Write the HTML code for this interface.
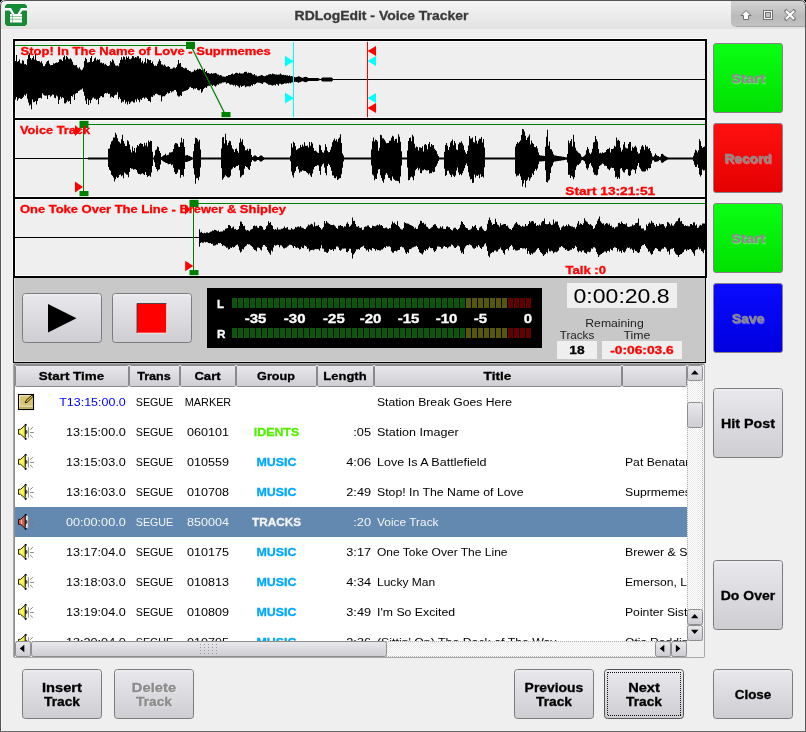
<!DOCTYPE html><html><head><meta charset="utf-8"><style>html,body{margin:0;padding:0;background:#efefef;overflow:hidden}</style></head><body><svg width="806" height="732" viewBox="0 0 806 732" style="display:block;will-change:transform;font-family:'Liberation Sans',sans-serif">
<defs>
<linearGradient id="tb" x1="0" y1="0" x2="0" y2="1"><stop offset="0" stop-color="#f6f6f6"/><stop offset="1" stop-color="#e2e2e2"/></linearGradient>
<linearGradient id="tab" x1="0" y1="0" x2="0" y2="1"><stop offset="0" stop-color="#d6d6d6"/><stop offset="0.6" stop-color="#bababa"/><stop offset="1" stop-color="#c2c2c2"/></linearGradient>
<linearGradient id="btn" x1="0" y1="0" x2="0" y2="1"><stop offset="0" stop-color="#e9e9ed"/><stop offset="1" stop-color="#ceced2"/></linearGradient>
<linearGradient id="gbtn" x1="0" y1="0" x2="0" y2="1"><stop offset="0" stop-color="#0aff14"/><stop offset="1" stop-color="#00e000"/></linearGradient>
<linearGradient id="rbtn" x1="0" y1="0" x2="0" y2="1"><stop offset="0" stop-color="#ff1010"/><stop offset="1" stop-color="#e40000"/></linearGradient>
<linearGradient id="bbtn" x1="0" y1="0" x2="0" y2="1"><stop offset="0" stop-color="#0a0aff"/><stop offset="1" stop-color="#0000e0"/></linearGradient>
<pattern id="chk" width="2" height="2" patternUnits="userSpaceOnUse"><rect width="2" height="2" fill="#fdfdfd"/><rect width="1" height="1" fill="#ebebeb"/><rect x="1" y="1" width="1" height="1" fill="#ebebeb"/></pattern>
<pattern id="dotv" width="1" height="2" patternUnits="userSpaceOnUse"><rect width="1" height="1" fill="#b4b4b4"/></pattern>
<pattern id="dothk" width="2" height="1" patternUnits="userSpaceOnUse"><rect width="1" height="1" fill="#111"/></pattern>
<pattern id="dotvk" width="1" height="2" patternUnits="userSpaceOnUse"><rect width="1" height="1" fill="#111"/></pattern>
<pattern id="doth" width="2" height="1" patternUnits="userSpaceOnUse"><rect width="1" height="1" fill="#b4b4b4"/></pattern>
</defs>
<rect x="0" y="0" width="806" height="732" fill="#000" />
<path d="M0 5 Q0 0 5 0 H801 Q806 0 806 5 V732 H0 Z" fill="#efefef"/>
<path d="M0 5 Q0 0 5 0 H801 Q806 0 806 5 V29 H0 Z" fill="url(#tb)"/>
<path d="M731 0 H801 Q806 0 806 5 V27 H736 Q731 27 731 22 Z" fill="url(#tab)"/>
<rect x="736" y="26" width="70" height="1" fill="#a6a6a6" />
<path d="M0.5 732 V6 Q0.5 0.5 6 0.5 H800 Q805.5 0.5 805.5 6 V732" fill="none" stroke="#555" stroke-width="1"/>
<rect x="0" y="731" width="806" height="1" fill="#6a6a6a" />
<rect x="1" y="29" width="1" height="702" fill="#fafafa" />
<g transform="translate(5,4)">
<path d="M2 0 H20 L22 2 V20 L20 22 H2 L0 20 V2 Z" fill="#178a35"/>
<path d="M0 4.5 H5.5 L8.5 9.5 V13 H3.5 V5 Z" fill="#fff" opacity="0"/>
<path d="M0 4 H6 L10 11 H12 L16 4 H22 V6.5 H17.5 L12.5 13.5 H9.5 L4.5 6.5 H0 Z" fill="#fff"/>
<rect x="5" y="10.5" width="12" height="1.3" fill="#fff" opacity="0"/>
<rect x="5" y="10" width="12" height="8.5" fill="#fff"/>
<rect x="5" y="12.2" width="12" height="0.8" fill="#178a35" opacity="0.6"/>
<rect x="5" y="14.8" width="12" height="0.8" fill="#178a35" opacity="0.6"/>
<rect x="7" y="10" width="0.8" height="8.5" fill="#178a35" opacity="0.5"/>
</g>
<text x="381.50" y="19.50" font-size="12.72" font-weight="bold" fill="#3a3a3a" stroke="#3a3a3a" stroke-width="0.3" text-anchor="middle" textLength="173.78" lengthAdjust="spacingAndGlyphs" >RDLogEdit - Voice Tracker</text>
<g fill="#fff" stroke="#6e6e6e" stroke-width="1">
<path d="M746 10.5 L751 15.5 H748.5 V19.5 H743.5 V15.5 H741 Z"/>
<rect x="763.5" y="10.5" width="9" height="9"/>
<rect x="765.5" y="12.5" width="5" height="5" fill="#c2c2c2"/>
<path d="M786.3 11.3 L793.7 18.7 M793.7 11.3 L786.3 18.7" stroke="#6a6a6a" stroke-width="3.8" stroke-linecap="square" opacity="0.7"/>
<path d="M786 11 L794 19 M794 11 L786 19" stroke="#fff" stroke-width="2.1" stroke-linecap="butt"/>
</g>

<rect x="13" y="39" width="693" height="238" fill="#efefef" />
<rect x="15" y="41" width="1" height="236" fill="#fff" opacity="0.6"/>
<rect x="15" y="79" width="690" height="1" fill="#000" />
<rect x="15" y="158" width="690" height="1" fill="#000" />
<rect x="15" y="237" width="690" height="1" fill="#000" />
<path d="M15 79.5 L15 60.9 L16 60.9 L16 55.0 L17 55.0 L17 61.7 L18 61.7 L18 60.9 L19 60.9 L19 59.5 L20 59.5 L20 63.3 L21 63.3 L21 63.6 L22 63.6 L22 60.2 L23 60.2 L23 60.8 L24 60.8 L24 64.3 L25 64.3 L25 63.9 L26 63.9 L26 65.1 L27 65.1 L27 59.2 L28 59.2 L28 54.7 L29 54.7 L29 53.2 L30 53.2 L30 58.0 L31 58.0 L31 59.4 L32 59.4 L32 58.1 L33 58.1 L33 56.3 L34 56.3 L34 59.6 L35 59.6 L35 52.7 L36 52.7 L36 60.2 L37 60.2 L37 61.1 L38 61.1 L38 60.9 L39 60.9 L39 61.2 L40 61.2 L40 62.5 L41 62.5 L41 61.2 L42 61.2 L42 63.6 L43 63.6 L43 66.2 L44 66.2 L44 66.0 L45 66.0 L45 64.2 L46 64.2 L46 62.3 L47 62.3 L47 61.1 L48 61.1 L48 60.5 L49 60.5 L49 63.7 L50 63.7 L50 65.3 L51 65.3 L51 65.0 L52 65.0 L52 65.0 L53 65.0 L53 63.3 L54 63.3 L54 63.8 L55 63.8 L55 63.0 L56 63.0 L56 62.6 L57 62.6 L57 62.7 L58 62.7 L58 61.9 L59 61.9 L59 59.6 L60 59.6 L60 59.2 L61 59.2 L61 59.8 L62 59.8 L62 60.9 L63 60.9 L63 57.2 L64 57.2 L64 55.6 L65 55.6 L65 59.6 L66 59.6 L66 56.0 L67 56.0 L67 57.2 L68 57.2 L68 58.7 L69 58.7 L69 59.2 L70 59.2 L70 58.3 L71 58.3 L71 59.5 L72 59.5 L72 61.8 L73 61.8 L73 64.8 L74 64.8 L74 65.3 L75 65.3 L75 65.2 L76 65.2 L76 65.1 L77 65.1 L77 67.5 L78 67.5 L78 68.4 L79 68.4 L79 67.3 L80 67.3 L80 69.2 L81 69.2 L81 70.2 L82 70.2 L82 69.6 L83 69.6 L83 67.4 L84 67.4 L84 61.0 L85 61.0 L85 57.8 L86 57.8 L86 59.0 L87 59.0 L87 62.6 L88 62.6 L88 62.3 L89 62.3 L89 62.1 L90 62.1 L90 58.1 L91 58.1 L91 56.0 L92 56.0 L92 62.0 L93 62.0 L93 61.1 L94 61.1 L94 58.6 L95 58.6 L95 57.4 L96 57.4 L96 60.6 L97 60.6 L97 59.3 L98 59.3 L98 60.1 L99 60.1 L99 59.2 L100 59.2 L100 62.7 L101 62.7 L101 62.6 L102 62.6 L102 63.4 L103 63.4 L103 63.0 L104 63.0 L104 64.4 L105 64.4 L105 63.7 L106 63.7 L106 65.1 L107 65.1 L107 66.0 L108 66.0 L108 66.1 L109 66.1 L109 65.2 L110 65.2 L110 60.9 L111 60.9 L111 62.3 L112 62.3 L112 59.2 L113 59.2 L113 60.5 L114 60.5 L114 63.6 L115 63.6 L115 65.6 L116 65.6 L116 65.7 L117 65.7 L117 65.4 L118 65.4 L118 66.3 L119 66.3 L119 63.3 L120 63.3 L120 59.9 L121 59.9 L121 57.3 L122 57.3 L122 59.6 L123 59.6 L123 56.6 L124 56.6 L124 56.9 L125 56.9 L125 59.6 L126 59.6 L126 56.6 L127 56.6 L127 58.0 L128 58.0 L128 56.5 L129 56.5 L129 59.1 L130 59.1 L130 59.2 L131 59.2 L131 58.3 L132 58.3 L132 55.9 L133 55.9 L133 56.2 L134 56.2 L134 58.1 L135 58.1 L135 57.1 L136 57.1 L136 57.4 L137 57.4 L137 56.3 L138 56.3 L138 56.2 L139 56.2 L139 58.4 L140 58.4 L140 58.0 L141 58.0 L141 62.6 L142 62.6 L142 60.8 L143 60.8 L143 63.6 L144 63.6 L144 61.9 L145 61.9 L145 58.3 L146 58.3 L146 63.3 L147 63.3 L147 59.1 L148 59.1 L148 59.6 L149 59.6 L149 60.2 L150 60.2 L150 60.0 L151 60.0 L151 62.9 L152 62.9 L152 61.5 L153 61.5 L153 64.3 L154 64.3 L154 66.0 L155 66.0 L155 65.5 L156 65.5 L156 66.1 L157 66.1 L157 63.7 L158 63.7 L158 61.5 L159 61.5 L159 59.2 L160 59.2 L160 60.9 L161 60.9 L161 64.4 L162 64.4 L162 64.4 L163 64.4 L163 65.4 L164 65.4 L164 64.4 L165 64.4 L165 65.8 L166 65.8 L166 66.9 L167 66.9 L167 66.5 L168 66.5 L168 66.2 L169 66.2 L169 67.1 L170 67.1 L170 68.7 L171 68.7 L171 68.8 L172 68.8 L172 68.4 L173 68.4 L173 67.6 L174 67.6 L174 67.5 L175 67.5 L175 68.2 L176 68.2 L176 66.9 L177 66.9 L177 64.5 L178 64.5 L178 60.1 L179 60.1 L179 63.4 L180 63.4 L180 63.1 L181 63.1 L181 66.7 L182 66.7 L182 67.1 L183 67.1 L183 67.9 L184 67.9 L184 68.6 L185 68.6 L185 67.8 L186 67.8 L186 68.2 L187 68.2 L187 70.1 L188 70.1 L188 70.1 L189 70.1 L189 71.1 L190 71.1 L190 71.3 L191 71.3 L191 72.3 L192 72.3 L192 71.7 L193 71.7 L193 71.6 L194 71.6 L194 69.7 L195 69.7 L195 70.6 L196 70.6 L196 70.1 L197 70.1 L197 68.8 L198 68.8 L198 69.5 L199 69.5 L199 68.7 L200 68.7 L200 69.0 L201 69.0 L201 70.1 L202 70.1 L202 70.0 L203 70.0 L203 70.3 L204 70.3 L204 68.7 L205 68.7 L205 72.0 L206 72.0 L206 70.9 L207 70.9 L207 73.0 L208 73.0 L208 73.0 L209 73.0 L209 73.8 L210 73.8 L210 73.8 L211 73.8 L211 73.1 L212 73.1 L212 73.7 L213 73.7 L213 73.3 L214 73.3 L214 73.2 L215 73.2 L215 73.0 L216 73.0 L216 73.6 L217 73.6 L217 74.5 L218 74.5 L218 74.6 L219 74.6 L219 75.4 L220 75.4 L220 75.0 L221 75.0 L221 75.5 L222 75.5 L222 76.4 L223 76.4 L223 76.4 L224 76.4 L224 76.8 L225 76.8 L225 76.7 L226 76.7 L226 76.0 L227 76.0 L227 75.9 L228 75.9 L228 75.1 L229 75.1 L229 75.1 L230 75.1 L230 75.1 L231 75.1 L231 73.9 L232 73.9 L232 73.4 L233 73.4 L233 74.4 L234 74.4 L234 74.1 L235 74.1 L235 73.1 L236 73.1 L236 72.8 L237 72.8 L237 72.9 L238 72.9 L238 73.7 L239 73.7 L239 72.7 L240 72.7 L240 73.4 L241 73.4 L241 73.5 L242 73.5 L242 73.4 L243 73.4 L243 73.3 L244 73.3 L244 72.0 L245 72.0 L245 71.8 L246 71.8 L246 71.8 L247 71.8 L247 73.3 L248 73.3 L248 72.6 L249 72.6 L249 72.9 L250 72.9 L250 72.7 L251 72.7 L251 73.2 L252 73.2 L252 74.6 L253 74.6 L253 74.8 L254 74.8 L254 74.1 L255 74.1 L255 75.5 L256 75.5 L256 75.6 L257 75.6 L257 76.4 L258 76.4 L258 76.1 L259 76.1 L259 75.8 L260 75.8 L260 75.6 L261 75.6 L261 75.1 L262 75.1 L262 75.2 L263 75.2 L263 75.9 L264 75.9 L264 76.2 L265 76.2 L265 75.9 L266 75.9 L266 75.3 L267 75.3 L267 75.2 L268 75.2 L268 74.6 L269 74.6 L269 74.3 L270 74.3 L270 74.1 L271 74.1 L271 74.4 L272 74.4 L272 73.5 L273 73.5 L273 74.1 L274 74.1 L274 74.3 L275 74.3 L275 74.6 L276 74.6 L276 74.6 L277 74.6 L277 74.8 L278 74.8 L278 74.5 L279 74.5 L279 74.5 L280 74.5 L280 73.5 L281 73.5 L281 74.6 L282 74.6 L282 75.0 L283 75.0 L283 74.7 L284 74.7 L284 75.3 L285 75.3 L285 75.1 L286 75.1 L286 75.4 L287 75.4 L287 75.3 L288 75.3 L288 75.9 L289 75.9 L289 75.2 L290 75.2 L290 76.3 L291 76.3 L291 76.0 L292 76.0 L292 76.2 L293 76.2 L293 76.7 L294 76.7 L294 77.0 L295 77.0 L295 77.2 L296 77.2 L296 77.1 L297 77.1 L297 76.7 L298 76.7 L298 76.3 L299 76.3 L299 76.4 L300 76.4 L300 77.0 L301 77.0 L301 77.6 L302 77.6 L302 77.7 L303 77.7 L303 77.4 L304 77.4 L304 77.1 L305 77.1 L305 76.8 L306 76.8 L306 76.9 L307 76.9 L307 77.6 L308 77.6 L308 77.9 L309 77.9 L309 77.9 L310 77.9 L310 77.9 L311 77.9 L311 77.9 L312 77.9 L312 77.9 L313 77.9 L313 77.9 L314 77.9 L314 77.9 L315 77.9 L315 77.9 L316 77.9 L316 77.9 L317 77.9 L317 77.9 L318 77.9 L318 78.2 L319 78.2 L319 78.7 L320 78.7 L320 78.9 L321 78.9 L321 78.2 L322 78.2 L322 77.6 L323 77.6 L323 77.6 L324 77.6 L324 77.6 L325 77.6 L325 77.6 L326 77.6 L326 77.6 L327 77.6 L327 77.6 L328 77.6 L328 77.6 L329 77.6 L329 77.6 L330 77.6 L330 77.6 L331 77.6 L331 77.6 L332 77.6 L332 78.2 L333 78.2 L333 79.2 L334 79.2 L334 79.5 L334 79.8 L333 79.8 L333 80.8 L332 80.8 L332 81.4 L331 81.4 L331 81.4 L330 81.4 L330 81.4 L329 81.4 L329 81.4 L328 81.4 L328 81.4 L327 81.4 L327 81.4 L326 81.4 L326 81.4 L325 81.4 L325 81.4 L324 81.4 L324 81.4 L323 81.4 L323 81.4 L322 81.4 L322 80.8 L321 80.8 L321 80.1 L320 80.1 L320 80.3 L319 80.3 L319 80.8 L318 80.8 L318 81.1 L317 81.1 L317 81.1 L316 81.1 L316 81.1 L315 81.1 L315 81.1 L314 81.1 L314 81.1 L313 81.1 L313 81.1 L312 81.1 L312 81.1 L311 81.1 L311 81.1 L310 81.1 L310 81.1 L309 81.1 L309 81.1 L308 81.1 L308 81.4 L307 81.4 L307 82.1 L306 82.1 L306 82.2 L305 82.2 L305 81.9 L304 81.9 L304 81.6 L303 81.6 L303 81.3 L302 81.3 L302 81.4 L301 81.4 L301 82.0 L300 82.0 L300 82.3 L299 82.3 L299 82.8 L298 82.8 L298 82.3 L297 82.3 L297 81.9 L296 81.9 L296 81.8 L295 81.8 L295 82.0 L294 82.0 L294 82.3 L293 82.3 L293 82.3 L292 82.3 L292 82.4 L291 82.4 L291 83.2 L290 83.2 L290 82.8 L289 82.8 L289 83.4 L288 83.4 L288 83.0 L287 83.0 L287 83.4 L286 83.4 L286 83.6 L285 83.6 L285 83.2 L284 83.2 L284 83.9 L283 83.9 L283 84.3 L282 84.3 L282 84.4 L281 84.4 L281 83.7 L280 83.7 L280 83.8 L279 83.8 L279 85.8 L278 85.8 L278 84.4 L277 84.4 L277 84.0 L276 84.0 L276 85.6 L275 85.6 L275 84.8 L274 84.8 L274 85.3 L273 85.3 L273 85.6 L272 85.6 L272 85.3 L271 85.3 L271 84.8 L270 84.8 L270 84.8 L269 84.8 L269 84.8 L268 84.8 L268 83.7 L267 83.7 L267 83.3 L266 83.3 L266 82.6 L265 82.6 L265 82.3 L264 82.3 L264 82.6 L263 82.6 L263 83.9 L262 83.9 L262 83.4 L261 83.4 L261 83.0 L260 83.0 L260 82.7 L259 82.7 L259 82.8 L258 82.8 L258 82.6 L257 82.6 L257 83.1 L256 83.1 L256 83.9 L255 83.9 L255 84.6 L254 84.6 L254 84.1 L253 84.1 L253 85.7 L252 85.7 L252 84.9 L251 84.9 L251 86.2 L250 86.2 L250 86.5 L249 86.5 L249 86.3 L248 86.3 L248 86.2 L247 86.2 L247 86.4 L246 86.4 L246 87.2 L245 87.2 L245 85.6 L244 85.6 L244 85.7 L243 85.7 L243 86.0 L242 86.0 L242 86.9 L241 86.9 L241 85.6 L240 85.6 L240 87.7 L239 87.7 L239 86.5 L238 86.5 L238 85.8 L237 85.8 L237 84.9 L236 84.9 L236 86.4 L235 86.4 L235 84.7 L234 84.7 L234 85.4 L233 85.4 L233 84.7 L232 84.7 L232 84.5 L231 84.5 L231 84.8 L230 84.8 L230 84.3 L229 84.3 L229 83.1 L228 83.1 L228 83.1 L227 83.1 L227 83.7 L226 83.7 L226 82.3 L225 82.3 L225 82.2 L224 82.2 L224 82.5 L223 82.5 L223 82.6 L222 82.6 L222 83.3 L221 83.3 L221 83.6 L220 83.6 L220 83.5 L219 83.5 L219 84.8 L218 84.8 L218 84.3 L217 84.3 L217 85.4 L216 85.4 L216 86.4 L215 86.4 L215 85.8 L214 85.8 L214 85.1 L213 85.1 L213 86.0 L212 86.0 L212 84.7 L211 84.7 L211 85.4 L210 85.4 L210 85.8 L209 85.8 L209 85.7 L208 85.7 L208 86.2 L207 86.2 L207 88.1 L206 88.1 L206 87.2 L205 87.2 L205 88.1 L204 88.1 L204 89.0 L203 89.0 L203 91.6 L202 91.6 L202 92.7 L201 92.7 L201 89.1 L200 89.1 L200 90.2 L199 90.2 L199 90.2 L198 90.2 L198 89.7 L197 89.7 L197 88.1 L196 88.1 L196 88.7 L195 88.7 L195 88.6 L194 88.6 L194 89.5 L193 89.5 L193 88.0 L192 88.0 L192 88.1 L191 88.1 L191 86.7 L190 86.7 L190 87.5 L189 87.5 L189 89.0 L188 89.0 L188 89.9 L187 89.9 L187 90.2 L186 90.2 L186 90.8 L185 90.8 L185 91.0 L184 91.0 L184 91.4 L183 91.4 L183 91.8 L182 91.8 L182 95.9 L181 95.9 L181 95.3 L180 95.3 L180 96.5 L179 96.5 L179 96.5 L178 96.5 L178 95.5 L177 95.5 L177 91.8 L176 91.8 L176 90.0 L175 90.0 L175 90.0 L174 90.0 L174 91.3 L173 91.3 L173 91.5 L172 91.5 L172 92.4 L171 92.4 L171 91.1 L170 91.1 L170 92.9 L169 92.9 L169 93.6 L168 93.6 L168 92.4 L167 92.4 L167 94.0 L166 94.0 L166 95.2 L165 95.2 L165 96.3 L164 96.3 L164 96.2 L163 96.2 L163 96.4 L162 96.4 L162 101.5 L161 101.5 L161 95.3 L160 95.3 L160 95.2 L159 95.2 L159 95.0 L158 95.0 L158 94.3 L157 94.3 L157 93.6 L156 93.6 L156 94.0 L155 94.0 L155 95.5 L154 95.5 L154 95.3 L153 95.3 L153 96.9 L152 96.9 L152 96.7 L151 96.7 L151 102.3 L150 102.3 L150 101.0 L149 101.0 L149 100.9 L148 100.9 L148 99.1 L147 99.1 L147 97.7 L146 97.7 L146 97.4 L145 97.4 L145 98.7 L144 98.7 L144 97.4 L143 97.4 L143 97.9 L142 97.9 L142 99.9 L141 99.9 L141 99.2 L140 99.2 L140 102.3 L139 102.3 L139 100.0 L138 100.0 L138 98.7 L137 98.7 L137 101.8 L136 101.8 L136 99.6 L135 99.6 L135 102.6 L134 102.6 L134 102.5 L133 102.5 L133 101.2 L132 101.2 L132 101.4 L131 101.4 L131 102.5 L130 102.5 L130 104.0 L129 104.0 L129 101.4 L128 101.4 L128 104.4 L127 104.4 L127 101.8 L126 101.8 L126 103.6 L125 103.6 L125 99.7 L124 99.7 L124 101.8 L123 101.8 L123 101.4 L122 101.4 L122 102.8 L121 102.8 L121 99.0 L120 99.0 L120 97.3 L119 97.3 L119 99.2 L118 99.2 L118 92.2 L117 92.2 L117 94.7 L116 94.7 L116 94.7 L115 94.7 L115 95.6 L114 95.6 L114 98.1 L113 98.1 L113 97.0 L112 97.0 L112 96.4 L111 96.4 L111 97.7 L110 97.7 L110 93.8 L109 93.8 L109 94.0 L108 94.0 L108 92.8 L107 92.8 L107 93.5 L106 93.5 L106 93.0 L105 93.0 L105 93.8 L104 93.8 L104 97.3 L103 97.3 L103 97.3 L102 97.3 L102 96.0 L101 96.0 L101 96.6 L100 96.6 L100 98.0 L99 98.0 L99 104.3 L98 104.3 L98 99.3 L97 99.3 L97 100.0 L96 100.0 L96 98.8 L95 98.8 L95 98.7 L94 98.7 L94 97.6 L93 97.6 L93 98.2 L92 98.2 L92 99.9 L91 99.9 L91 103.3 L90 103.3 L90 100.3 L89 100.3 L89 104.9 L88 104.9 L88 98.8 L87 98.8 L87 104.0 L86 104.0 L86 100.5 L85 100.5 L85 95.8 L84 95.8 L84 91.8 L83 91.8 L83 88.4 L82 88.4 L82 89.4 L81 89.4 L81 89.7 L80 89.7 L80 90.6 L79 90.6 L79 90.9 L78 90.9 L78 92.9 L77 92.9 L77 93.1 L76 93.1 L76 93.8 L75 93.8 L75 100.0 L74 100.0 L74 94.4 L73 94.4 L73 96.7 L72 96.7 L72 95.9 L71 95.9 L71 104.0 L70 104.0 L70 101.1 L69 101.1 L69 101.8 L68 101.8 L68 100.4 L67 100.4 L67 102.2 L66 102.2 L66 103.4 L65 103.4 L65 103.2 L64 103.2 L64 98.0 L63 98.0 L63 97.3 L62 97.3 L62 98.5 L61 98.5 L61 96.7 L60 96.7 L60 99.8 L59 99.8 L59 104.1 L58 104.1 L58 96.6 L57 96.6 L57 95.5 L56 95.5 L56 98.2 L55 98.2 L55 97.7 L54 97.7 L54 94.8 L53 94.8 L53 94.6 L52 94.6 L52 95.8 L51 95.8 L51 96.7 L50 96.7 L50 95.0 L49 95.0 L49 95.3 L48 95.3 L48 98.9 L47 98.9 L47 95.6 L46 95.6 L46 95.8 L45 95.8 L45 95.5 L44 95.5 L44 94.8 L43 94.8 L43 93.3 L42 93.3 L42 98.5 L41 98.5 L41 97.7 L40 97.7 L40 98.1 L39 98.1 L39 98.3 L38 98.3 L38 100.9 L37 100.9 L37 104.4 L36 104.4 L36 101.0 L35 101.0 L35 102.1 L34 102.1 L34 102.3 L33 102.3 L33 99.6 L32 99.6 L32 109.2 L31 109.2 L31 104.4 L30 104.4 L30 105.5 L29 105.5 L29 102.6 L28 102.6 L28 98.8 L27 98.8 L27 93.8 L26 93.8 L26 95.8 L25 95.8 L25 94.8 L24 94.8 L24 96.7 L23 96.7 L23 98.1 L22 98.1 L22 99.0 L21 99.0 L21 98.8 L20 98.8 L20 98.0 L19 98.0 L19 98.8 L18 98.8 L18 100.8 L17 100.8 L17 96.9 L16 96.9 L16 99.5 L15 99.5 Z" fill="#000"/>
<path d="M83 158.5 L83 158.5 L84 158.5 L84 158.5 L85 158.5 L85 158.5 L86 158.5 L86 158.5 L87 158.5 L87 158.5 L88 158.5 L88 157.4 L89 157.4 L89 157.4 L90 157.4 L90 157.4 L91 157.4 L91 157.4 L92 157.4 L92 157.4 L93 157.4 L93 157.4 L94 157.4 L94 157.4 L95 157.4 L95 157.4 L96 157.4 L96 157.4 L97 157.4 L97 157.4 L98 157.4 L98 157.4 L99 157.4 L99 157.4 L100 157.4 L100 157.4 L101 157.4 L101 157.4 L102 157.4 L102 157.4 L103 157.4 L103 157.4 L104 157.4 L104 157.4 L105 157.4 L105 157.4 L106 157.4 L106 157.4 L107 157.4 L107 157.4 L108 157.4 L108 148.7 L109 148.7 L109 148.4 L110 148.4 L110 144.4 L111 144.4 L111 141.4 L112 141.4 L112 140.6 L113 140.6 L113 137.4 L114 137.4 L114 137.5 L115 137.5 L115 132.7 L116 132.7 L116 134.8 L117 134.8 L117 138.2 L118 138.2 L118 141.2 L119 141.2 L119 142.3 L120 142.3 L120 143.5 L121 143.5 L121 139.2 L122 139.2 L122 134.8 L123 134.8 L123 140.9 L124 140.9 L124 143.6 L125 143.6 L125 146.0 L126 146.0 L126 146.1 L127 146.1 L127 140.3 L128 140.3 L128 141.2 L129 141.2 L129 144.5 L130 144.5 L130 149.4 L131 149.4 L131 152.5 L132 152.5 L132 146.5 L133 146.5 L133 151.0 L134 151.0 L134 147.9 L135 147.9 L135 152.4 L136 152.4 L136 147.4 L137 147.4 L137 144.9 L138 144.9 L138 145.9 L139 145.9 L139 143.9 L140 143.9 L140 143.1 L141 143.1 L141 143.7 L142 143.7 L142 144.0 L143 144.0 L143 146.6 L144 146.6 L144 142.8 L145 142.8 L145 145.4 L146 145.4 L146 142.8 L147 142.8 L147 146.5 L148 146.5 L148 140.6 L149 140.6 L149 141.9 L150 141.9 L150 140.7 L151 140.7 L151 141.0 L152 141.0 L152 151.8 L153 151.8 L153 157.4 L154 157.4 L154 155.6 L155 155.6 L155 150.3 L156 150.3 L156 149.4 L157 149.4 L157 146.5 L158 146.5 L158 147.2 L159 147.2 L159 151.1 L160 151.1 L160 152.9 L161 152.9 L161 157.0 L162 157.0 L162 156.2 L163 156.2 L163 155.6 L164 155.6 L164 154.9 L165 154.9 L165 153.8 L166 153.8 L166 155.5 L167 155.5 L167 155.1 L168 155.1 L168 154.8 L169 154.8 L169 152.5 L170 152.5 L170 152.4 L171 152.4 L171 152.2 L172 152.2 L172 151.7 L173 151.7 L173 148.9 L174 148.9 L174 144.4 L175 144.4 L175 143.0 L176 143.0 L176 143.3 L177 143.3 L177 143.7 L178 143.7 L178 146.4 L179 146.4 L179 146.9 L180 146.9 L180 142.5 L181 142.5 L181 137.8 L182 137.8 L182 142.6 L183 142.6 L183 138.9 L184 138.9 L184 147.0 L185 147.0 L185 155.4 L186 155.4 L186 155.2 L187 155.2 L187 155.1 L188 155.1 L188 155.7 L189 155.7 L189 156.1 L190 156.1 L190 156.5 L191 156.5 L191 157.0 L192 157.0 L192 157.4 L193 157.4 L193 151.2 L194 151.2 L194 143.8 L195 143.8 L195 137.8 L196 137.8 L196 138.0 L197 138.0 L197 139.2 L198 139.2 L198 141.6 L199 141.6 L199 139.8 L200 139.8 L200 149.4 L201 149.4 L201 157.4 L202 157.4 L202 157.4 L203 157.4 L203 157.4 L204 157.4 L204 157.4 L205 157.4 L205 157.4 L206 157.4 L206 157.4 L207 157.4 L207 157.4 L208 157.4 L208 157.4 L209 157.4 L209 157.4 L210 157.4 L210 157.4 L211 157.4 L211 157.4 L212 157.4 L212 157.4 L213 157.4 L213 157.4 L214 157.4 L214 157.4 L215 157.4 L215 157.4 L216 157.4 L216 157.4 L217 157.4 L217 157.4 L218 157.4 L218 157.4 L219 157.4 L219 157.4 L220 157.4 L220 157.4 L221 157.4 L221 148.4 L222 148.4 L222 137.6 L223 137.6 L223 137.0 L224 137.0 L224 143.5 L225 143.5 L225 133.7 L226 133.7 L226 140.3 L227 140.3 L227 145.2 L228 145.2 L228 142.8 L229 142.8 L229 140.8 L230 140.8 L230 141.3 L231 141.3 L231 145.2 L232 145.2 L232 148.6 L233 148.6 L233 149.6 L234 149.6 L234 151.9 L235 151.9 L235 149.1 L236 149.1 L236 148.6 L237 148.6 L237 150.9 L238 150.9 L238 152.7 L239 152.7 L239 142.8 L240 142.8 L240 138.4 L241 138.4 L241 141.8 L242 141.8 L242 139.4 L243 139.4 L243 144.9 L244 144.9 L244 146.5 L245 146.5 L245 150.3 L246 150.3 L246 150.2 L247 150.2 L247 148.7 L248 148.7 L248 150.8 L249 150.8 L249 148.8 L250 148.8 L250 149.0 L251 149.0 L251 155.0 L252 155.0 L252 157.0 L253 157.0 L253 156.3 L254 156.3 L254 155.6 L255 155.6 L255 155.6 L256 155.6 L256 156.3 L257 156.3 L257 157.0 L258 157.0 L258 157.0 L259 157.0 L259 156.3 L260 156.3 L260 155.6 L261 155.6 L261 155.6 L262 155.6 L262 156.3 L263 156.3 L263 157.0 L264 157.0 L264 157.4 L265 157.4 L265 157.4 L266 157.4 L266 157.4 L267 157.4 L267 157.4 L268 157.4 L268 157.4 L269 157.4 L269 157.4 L270 157.4 L270 157.4 L271 157.4 L271 157.4 L272 157.4 L272 157.4 L273 157.4 L273 157.4 L274 157.4 L274 157.4 L275 157.4 L275 157.4 L276 157.4 L276 157.4 L277 157.4 L277 157.4 L278 157.4 L278 157.4 L279 157.4 L279 157.4 L280 157.4 L280 157.4 L281 157.4 L281 157.4 L282 157.4 L282 157.4 L283 157.4 L283 157.4 L284 157.4 L284 157.4 L285 157.4 L285 157.4 L286 157.4 L286 157.4 L287 157.4 L287 157.4 L288 157.4 L288 157.4 L289 157.4 L289 157.4 L290 157.4 L290 155.8 L291 155.8 L291 143.6 L292 143.6 L292 147.4 L293 147.4 L293 141.7 L294 141.7 L294 142.9 L295 142.9 L295 146.3 L296 146.3 L296 150.1 L297 150.1 L297 149.2 L298 149.2 L298 148.4 L299 148.4 L299 148.1 L300 148.1 L300 145.1 L301 145.1 L301 147.1 L302 147.1 L302 144.6 L303 144.6 L303 146.2 L304 146.2 L304 142.3 L305 142.3 L305 145.7 L306 145.7 L306 145.9 L307 145.9 L307 145.5 L308 145.5 L308 147.6 L309 147.6 L309 142.0 L310 142.0 L310 145.8 L311 145.8 L311 142.0 L312 142.0 L312 143.4 L313 143.4 L313 148.0 L314 148.0 L314 150.9 L315 150.9 L315 150.6 L316 150.6 L316 151.5 L317 151.5 L317 152.5 L318 152.5 L318 153.0 L319 153.0 L319 144.7 L320 144.7 L320 145.5 L321 145.5 L321 149.9 L322 149.9 L322 152.3 L323 152.3 L323 152.8 L324 152.8 L324 150.6 L325 150.6 L325 144.3 L326 144.3 L326 147.0 L327 147.0 L327 150.8 L328 150.8 L328 152.3 L329 152.3 L329 152.0 L330 152.0 L330 149.8 L331 149.8 L331 146.7 L332 146.7 L332 142.3 L333 142.3 L333 140.3 L334 140.3 L334 138.4 L335 138.4 L335 140.8 L336 140.8 L336 139.3 L337 139.3 L337 141.8 L338 141.8 L338 138.7 L339 138.7 L339 137.6 L340 137.6 L340 134.3 L341 134.3 L341 142.9 L342 142.9 L342 153.5 L343 153.5 L343 155.5 L344 155.5 L344 157.4 L345 157.4 L345 157.4 L346 157.4 L346 157.4 L347 157.4 L347 157.4 L348 157.4 L348 157.4 L349 157.4 L349 157.4 L350 157.4 L350 157.4 L351 157.4 L351 157.4 L352 157.4 L352 157.4 L353 157.4 L353 157.4 L354 157.4 L354 157.4 L355 157.4 L355 157.4 L356 157.4 L356 157.4 L357 157.4 L357 157.4 L358 157.4 L358 157.4 L359 157.4 L359 157.4 L360 157.4 L360 157.4 L361 157.4 L361 157.4 L362 157.4 L362 157.4 L363 157.4 L363 157.4 L364 157.4 L364 157.4 L365 157.4 L365 157.4 L366 157.4 L366 157.4 L367 157.4 L367 157.4 L368 157.4 L368 157.4 L369 157.4 L369 157.4 L370 157.4 L370 157.4 L371 157.4 L371 149.6 L372 149.6 L372 141.3 L373 141.3 L373 137.6 L374 137.6 L374 141.4 L375 141.4 L375 139.6 L376 139.6 L376 140.0 L377 140.0 L377 141.4 L378 141.4 L378 150.8 L379 150.8 L379 147.8 L380 147.8 L380 134.7 L381 134.7 L381 135.3 L382 135.3 L382 138.3 L383 138.3 L383 138.5 L384 138.5 L384 139.8 L385 139.8 L385 141.5 L386 141.5 L386 143.2 L387 143.2 L387 142.9 L388 142.9 L388 143.1 L389 143.1 L389 140.8 L390 140.8 L390 140.7 L391 140.7 L391 137.7 L392 137.7 L392 135.8 L393 135.8 L393 136.6 L394 136.6 L394 140.8 L395 140.8 L395 139.1 L396 139.1 L396 138.7 L397 138.7 L397 142.7 L398 142.7 L398 134.2 L399 134.2 L399 136.7 L400 136.7 L400 141.7 L401 141.7 L401 151.3 L402 151.3 L402 157.4 L403 157.4 L403 157.4 L404 157.4 L404 157.4 L405 157.4 L405 157.4 L406 157.4 L406 157.4 L407 157.4 L407 150.6 L408 150.6 L408 141.1 L409 141.1 L409 137.9 L410 137.9 L410 137.6 L411 137.6 L411 141.2 L412 141.2 L412 134.7 L413 134.7 L413 136.5 L414 136.5 L414 143.7 L415 143.7 L415 147.8 L416 147.8 L416 146.4 L417 146.4 L417 146.9 L418 146.9 L418 150.6 L419 150.6 L419 147.3 L420 147.3 L420 147.5 L421 147.5 L421 148.0 L422 148.0 L422 146.2 L423 146.2 L423 151.6 L424 151.6 L424 144.8 L425 144.8 L425 144.1 L426 144.1 L426 145.3 L427 145.3 L427 149.2 L428 149.2 L428 144.0 L429 144.0 L429 142.1 L430 142.1 L430 146.7 L431 146.7 L431 144.0 L432 144.0 L432 145.3 L433 145.3 L433 145.0 L434 145.0 L434 148.7 L435 148.7 L435 149.9 L436 149.9 L436 151.2 L437 151.2 L437 154.2 L438 154.2 L438 155.9 L439 155.9 L439 157.4 L440 157.4 L440 157.4 L441 157.4 L441 157.4 L442 157.4 L442 157.4 L443 157.4 L443 157.4 L444 157.4 L444 151.7 L445 151.7 L445 144.9 L446 144.9 L446 143.1 L447 143.1 L447 145.7 L448 145.7 L448 150.1 L449 150.1 L449 147.0 L450 147.0 L450 142.5 L451 142.5 L451 141.0 L452 141.0 L452 139.6 L453 139.6 L453 145.3 L454 145.3 L454 140.9 L455 140.9 L455 143.3 L456 143.3 L456 149.6 L457 149.6 L457 150.1 L458 150.1 L458 144.2 L459 144.2 L459 142.4 L460 142.4 L460 142.8 L461 142.8 L461 141.3 L462 141.3 L462 143.6 L463 143.6 L463 145.6 L464 145.6 L464 149.9 L465 149.9 L465 152.5 L466 152.5 L466 154.0 L467 154.0 L467 151.0 L468 151.0 L468 145.4 L469 145.4 L469 135.9 L470 135.9 L470 138.5 L471 138.5 L471 138.4 L472 138.4 L472 137.4 L473 137.4 L473 142.0 L474 142.0 L474 142.4 L475 142.4 L475 135.9 L476 135.9 L476 140.7 L477 140.7 L477 143.5 L478 143.5 L478 140.5 L479 140.5 L479 138.8 L480 138.8 L480 138.7 L481 138.7 L481 136.9 L482 136.9 L482 142.5 L483 142.5 L483 138.9 L484 138.9 L484 147.4 L485 147.4 L485 157.4 L486 157.4 L486 157.4 L487 157.4 L487 157.4 L488 157.4 L488 157.4 L489 157.4 L489 157.4 L490 157.4 L490 157.4 L491 157.4 L491 157.4 L492 157.4 L492 157.4 L493 157.4 L493 157.4 L494 157.4 L494 157.4 L495 157.4 L495 157.4 L496 157.4 L496 157.4 L497 157.4 L497 157.4 L498 157.4 L498 157.4 L499 157.4 L499 157.4 L500 157.4 L500 157.4 L501 157.4 L501 157.4 L502 157.4 L502 157.4 L503 157.4 L503 157.4 L504 157.4 L504 157.4 L505 157.4 L505 157.4 L506 157.4 L506 157.4 L507 157.4 L507 157.4 L508 157.4 L508 157.4 L509 157.4 L509 157.4 L510 157.4 L510 157.4 L511 157.4 L511 157.4 L512 157.4 L512 157.4 L513 157.4 L513 157.4 L514 157.4 L514 157.4 L515 157.4 L515 146.6 L516 146.6 L516 144.1 L517 144.1 L517 142.0 L518 142.0 L518 143.3 L519 143.3 L519 141.7 L520 141.7 L520 140.4 L521 140.4 L521 135.0 L522 135.0 L522 129.1 L523 129.1 L523 129.3 L524 129.3 L524 131.6 L525 131.6 L525 135.8 L526 135.8 L526 140.1 L527 140.1 L527 137.7 L528 137.7 L528 136.4 L529 136.4 L529 134.5 L530 134.5 L530 144.6 L531 144.6 L531 140.5 L532 140.5 L532 143.1 L533 143.1 L533 144.1 L534 144.1 L534 146.9 L535 146.9 L535 147.2 L536 147.2 L536 146.1 L537 146.1 L537 148.5 L538 148.5 L538 152.5 L539 152.5 L539 155.0 L540 155.0 L540 155.4 L541 155.4 L541 155.6 L542 155.6 L542 155.7 L543 155.7 L543 155.8 L544 155.8 L544 155.9 L545 155.9 L545 146.7 L546 146.7 L546 136.7 L547 136.7 L547 129.8 L548 129.8 L548 145.8 L549 145.8 L549 141.4 L550 141.4 L550 149.0 L551 149.0 L551 149.6 L552 149.6 L552 151.4 L553 151.4 L553 154.2 L554 154.2 L554 155.2 L555 155.2 L555 155.5 L556 155.5 L556 155.7 L557 155.7 L557 155.9 L558 155.9 L558 156.0 L559 156.0 L559 156.2 L560 156.2 L560 156.3 L561 156.3 L561 156.5 L562 156.5 L562 156.7 L563 156.7 L563 156.8 L564 156.8 L564 157.0 L565 157.0 L565 157.2 L566 157.2 L566 157.3 L567 157.3 L567 154.1 L568 154.1 L568 140.5 L569 140.5 L569 143.2 L570 143.2 L570 141.1 L571 141.1 L571 138.9 L572 138.9 L572 146.5 L573 146.5 L573 134.7 L574 134.7 L574 141.8 L575 141.8 L575 147.8 L576 147.8 L576 150.6 L577 150.6 L577 151.5 L578 151.5 L578 152.7 L579 152.7 L579 153.3 L580 153.3 L580 154.3 L581 154.3 L581 156.6 L582 156.6 L582 157.1 L583 157.1 L583 156.4 L584 156.4 L584 155.8 L585 155.8 L585 154.4 L586 154.4 L586 150.3 L587 150.3 L587 147.0 L588 147.0 L588 149.1 L589 149.1 L589 152.8 L590 152.8 L590 154.2 L591 154.2 L591 152.4 L592 152.4 L592 148.7 L593 148.7 L593 142.5 L594 142.5 L594 142.1 L595 142.1 L595 136.0 L596 136.0 L596 139.3 L597 139.3 L597 141.5 L598 141.5 L598 148.9 L599 148.9 L599 153.3 L600 153.3 L600 152.8 L601 152.8 L601 153.4 L602 153.4 L602 152.3 L603 152.3 L603 153.1 L604 153.1 L604 152.5 L605 152.5 L605 152.1 L606 152.1 L606 150.1 L607 150.1 L607 149.0 L608 149.0 L608 149.0 L609 149.0 L609 147.8 L610 147.8 L610 152.5 L611 152.5 L611 149.1 L612 149.1 L612 149.0 L613 149.0 L613 148.4 L614 148.4 L614 145.7 L615 145.7 L615 146.8 L616 146.8 L616 137.5 L617 137.5 L617 140.5 L618 140.5 L618 139.7 L619 139.7 L619 141.1 L620 141.1 L620 147.7 L621 147.7 L621 151.4 L622 151.4 L622 149.8 L623 149.8 L623 144.4 L624 144.4 L624 142.1 L625 142.1 L625 147.6 L626 147.6 L626 148.3 L627 148.3 L627 148.5 L628 148.5 L628 144.0 L629 144.0 L629 142.0 L630 142.0 L630 142.0 L631 142.0 L631 150.7 L632 150.7 L632 146.8 L633 146.8 L633 148.0 L634 148.0 L634 146.8 L635 146.8 L635 145.7 L636 145.7 L636 147.5 L637 147.5 L637 151.8 L638 151.8 L638 153.8 L639 153.8 L639 153.3 L640 153.3 L640 149.5 L641 149.5 L641 146.4 L642 146.4 L642 145.0 L643 145.0 L643 146.8 L644 146.8 L644 149.7 L645 149.7 L645 145.1 L646 145.1 L646 146.7 L647 146.7 L647 146.5 L648 146.5 L648 148.9 L649 148.9 L649 148.1 L650 148.1 L650 150.9 L651 150.9 L651 153.3 L652 153.3 L652 156.5 L653 156.5 L653 156.8 L654 156.8 L654 155.4 L655 155.4 L655 153.5 L656 153.5 L656 155.0 L657 155.0 L657 156.0 L658 156.0 L658 156.0 L659 156.0 L659 157.0 L660 157.0 L660 156.4 L661 156.4 L661 154.1 L662 154.1 L662 153.7 L663 153.7 L663 154.7 L664 154.7 L664 155.7 L665 155.7 L665 156.2 L666 156.2 L666 156.7 L667 156.7 L667 157.2 L668 157.2 L668 157.4 L669 157.4 L669 157.4 L670 157.4 L670 157.4 L671 157.4 L671 157.4 L672 157.4 L672 157.4 L673 157.4 L673 157.4 L674 157.4 L674 157.4 L675 157.4 L675 157.4 L676 157.4 L676 157.4 L677 157.4 L677 157.4 L678 157.4 L678 157.4 L679 157.4 L679 157.4 L680 157.4 L680 157.4 L681 157.4 L681 157.4 L682 157.4 L682 157.4 L683 157.4 L683 157.4 L684 157.4 L684 157.4 L685 157.4 L685 157.4 L686 157.4 L686 157.4 L687 157.4 L687 157.4 L688 157.4 L688 157.4 L689 157.4 L689 157.4 L690 157.4 L690 157.4 L691 157.4 L691 157.4 L692 157.4 L692 157.4 L693 157.4 L693 155.7 L694 155.7 L694 152.8 L695 152.8 L695 149.8 L696 149.8 L696 150.6 L697 150.6 L697 152.6 L698 152.6 L698 150.2 L699 150.2 L699 139.2 L700 139.2 L700 141.2 L701 141.2 L701 146.1 L702 146.1 L702 147.8 L703 147.8 L703 147.1 L704 147.1 L704 146.6 L705 146.6 L705 158.5 L705 170.3 L704 170.3 L704 170.5 L703 170.5 L703 169.5 L702 169.5 L702 175.0 L701 175.0 L701 176.6 L700 176.6 L700 174.6 L699 174.6 L699 168.0 L698 168.0 L698 164.6 L697 164.6 L697 167.1 L696 167.1 L696 167.0 L695 167.0 L695 164.8 L694 164.8 L694 161.3 L693 161.3 L693 159.6 L692 159.6 L692 159.6 L691 159.6 L691 159.6 L690 159.6 L690 159.6 L689 159.6 L689 159.6 L688 159.6 L688 159.6 L687 159.6 L687 159.6 L686 159.6 L686 159.6 L685 159.6 L685 159.6 L684 159.6 L684 159.6 L683 159.6 L683 159.6 L682 159.6 L682 159.6 L681 159.6 L681 159.6 L680 159.6 L680 159.6 L679 159.6 L679 159.6 L678 159.6 L678 159.6 L677 159.6 L677 159.6 L676 159.6 L676 159.6 L675 159.6 L675 159.6 L674 159.6 L674 159.6 L673 159.6 L673 159.6 L672 159.6 L672 159.6 L671 159.6 L671 159.6 L670 159.6 L670 159.6 L669 159.6 L669 159.6 L668 159.6 L668 159.8 L667 159.8 L667 160.3 L666 160.3 L666 160.8 L665 160.8 L665 161.3 L664 161.3 L664 162.2 L663 162.2 L663 162.8 L662 162.8 L662 162.6 L661 162.6 L661 160.6 L660 160.6 L660 160.0 L659 160.0 L659 161.0 L658 161.0 L658 161.6 L657 161.6 L657 161.8 L656 161.8 L656 161.9 L655 161.9 L655 161.4 L654 161.4 L654 160.2 L653 160.2 L653 160.5 L652 160.5 L652 163.7 L651 163.7 L651 167.9 L650 167.9 L650 168.5 L649 168.5 L649 168.1 L648 168.1 L648 170.6 L647 170.6 L647 169.2 L646 169.2 L646 171.3 L645 171.3 L645 171.5 L644 171.5 L644 171.5 L643 171.5 L643 171.4 L642 171.4 L642 170.8 L641 170.8 L641 168.7 L640 168.7 L640 167.2 L639 167.2 L639 163.1 L638 163.1 L638 165.7 L637 165.7 L637 169.2 L636 169.2 L636 173.5 L635 173.5 L635 170.0 L634 170.0 L634 169.4 L633 169.4 L633 169.3 L632 169.3 L632 170.4 L631 170.4 L631 175.2 L630 175.2 L630 176.1 L629 176.1 L629 175.2 L628 175.2 L628 169.2 L627 169.2 L627 168.9 L626 168.9 L626 170.1 L625 170.1 L625 172.6 L624 172.6 L624 172.3 L623 172.3 L623 170.5 L622 170.5 L622 168.0 L621 168.0 L621 168.8 L620 168.8 L620 178.8 L619 178.8 L619 177.2 L618 177.2 L618 179.0 L617 179.0 L617 176.8 L616 176.8 L616 177.3 L615 177.3 L615 170.7 L614 170.7 L614 168.1 L613 168.1 L613 167.9 L612 167.9 L612 167.4 L611 167.4 L611 168.6 L610 168.6 L610 170.2 L609 170.2 L609 169.3 L608 169.3 L608 168.4 L607 168.4 L607 165.9 L606 165.9 L606 165.8 L605 165.8 L605 165.7 L604 165.7 L604 164.1 L603 164.1 L603 163.5 L602 163.5 L602 164.4 L601 164.4 L601 165.3 L600 165.3 L600 165.9 L599 165.9 L599 169.3 L598 169.3 L598 174.8 L597 174.8 L597 175.4 L596 175.4 L596 174.8 L595 174.8 L595 174.8 L594 174.8 L594 172.5 L593 172.5 L593 167.6 L592 167.6 L592 165.7 L591 165.7 L591 163.0 L590 163.0 L590 164.2 L589 164.2 L589 167.7 L588 167.7 L588 169.7 L587 169.7 L587 168.3 L586 168.3 L586 163.8 L585 163.8 L585 161.2 L584 161.2 L584 160.6 L583 160.6 L583 159.9 L582 159.9 L582 160.4 L581 160.4 L581 162.7 L580 162.7 L580 163.7 L579 163.7 L579 164.9 L578 164.9 L578 164.7 L577 164.7 L577 166.4 L576 166.4 L576 169.9 L575 169.9 L575 177.3 L574 177.3 L574 179.2 L573 179.2 L573 176.8 L572 176.8 L572 175.8 L571 175.8 L571 177.9 L570 177.9 L570 174.7 L569 174.7 L569 174.8 L568 174.8 L568 162.6 L567 162.6 L567 159.7 L566 159.7 L566 159.8 L565 159.8 L565 160.0 L564 160.0 L564 160.2 L563 160.2 L563 160.3 L562 160.3 L562 160.5 L561 160.5 L561 160.7 L560 160.7 L560 160.8 L559 160.8 L559 161.0 L558 161.0 L558 161.1 L557 161.1 L557 161.3 L556 161.3 L556 161.5 L555 161.5 L555 161.6 L554 161.6 L554 162.6 L553 162.6 L553 165.4 L552 165.4 L552 167.2 L551 167.2 L551 173.0 L550 173.0 L550 179.4 L549 179.4 L549 180.6 L548 180.6 L548 182.6 L547 182.6 L547 182.0 L546 182.0 L546 170.3 L545 170.3 L545 161.1 L544 161.1 L544 161.2 L543 161.2 L543 161.3 L542 161.3 L542 161.4 L541 161.4 L541 161.6 L540 161.6 L540 161.4 L539 161.4 L539 164.2 L538 164.2 L538 168.5 L537 168.5 L537 170.4 L536 170.4 L536 169.0 L535 169.0 L535 171.0 L534 171.0 L534 175.1 L533 175.1 L533 173.5 L532 173.5 L532 177.0 L531 177.0 L531 178.5 L530 178.5 L530 180.8 L529 180.8 L529 177.2 L528 177.2 L528 179.7 L527 179.7 L527 181.1 L526 181.1 L526 187.5 L525 187.5 L525 180.1 L524 180.1 L524 183.6 L523 183.6 L523 186.4 L522 186.4 L522 179.9 L521 179.9 L521 176.5 L520 176.5 L520 173.8 L519 173.8 L519 175.6 L518 175.6 L518 175.6 L517 175.6 L517 176.6 L516 176.6 L516 173.8 L515 173.8 L515 159.6 L514 159.6 L514 159.6 L513 159.6 L513 159.6 L512 159.6 L512 159.6 L511 159.6 L511 159.6 L510 159.6 L510 159.6 L509 159.6 L509 159.6 L508 159.6 L508 159.6 L507 159.6 L507 159.6 L506 159.6 L506 159.6 L505 159.6 L505 159.6 L504 159.6 L504 159.6 L503 159.6 L503 159.6 L502 159.6 L502 159.6 L501 159.6 L501 159.6 L500 159.6 L500 159.6 L499 159.6 L499 159.6 L498 159.6 L498 159.6 L497 159.6 L497 159.6 L496 159.6 L496 159.6 L495 159.6 L495 159.6 L494 159.6 L494 159.6 L493 159.6 L493 159.6 L492 159.6 L492 159.6 L491 159.6 L491 159.6 L490 159.6 L490 159.6 L489 159.6 L489 159.6 L488 159.6 L488 159.6 L487 159.6 L487 159.6 L486 159.6 L486 159.6 L485 159.6 L485 167.3 L484 167.3 L484 177.5 L483 177.5 L483 176.3 L482 176.3 L482 177.0 L481 177.0 L481 174.3 L480 174.3 L480 178.3 L479 178.3 L479 174.7 L478 174.7 L478 176.1 L477 176.1 L477 175.6 L476 175.6 L476 177.5 L475 177.5 L475 174.4 L474 174.4 L474 182.7 L473 182.7 L473 183.0 L472 183.0 L472 178.9 L471 178.9 L471 179.6 L470 179.6 L470 176.4 L469 176.4 L469 172.2 L468 172.2 L468 166.1 L467 166.1 L467 163.4 L466 163.4 L466 165.3 L465 165.3 L465 168.3 L464 168.3 L464 170.8 L463 170.8 L463 173.3 L462 173.3 L462 175.3 L461 175.3 L461 174.1 L460 174.1 L460 174.9 L459 174.9 L459 172.6 L458 172.6 L458 167.6 L457 167.6 L457 170.6 L456 170.6 L456 175.5 L455 175.5 L455 176.9 L454 176.9 L454 175.7 L453 175.7 L453 174.5 L452 174.5 L452 177.1 L451 177.1 L451 175.1 L450 175.1 L450 173.6 L449 173.6 L449 170.8 L448 170.8 L448 170.7 L447 170.7 L447 175.0 L446 175.0 L446 176.1 L445 176.1 L445 168.7 L444 168.7 L444 159.6 L443 159.6 L443 159.6 L442 159.6 L442 159.6 L441 159.6 L441 159.6 L440 159.6 L440 159.6 L439 159.6 L439 161.1 L438 161.1 L438 163.5 L437 163.5 L437 165.7 L436 165.7 L436 166.9 L435 166.9 L435 171.8 L434 171.8 L434 172.2 L433 172.2 L433 171.4 L432 171.4 L432 173.2 L431 173.2 L431 172.9 L430 172.9 L430 173.4 L429 173.4 L429 170.0 L428 170.0 L428 170.5 L427 170.5 L427 170.5 L426 170.5 L426 169.9 L425 169.9 L425 169.3 L424 169.3 L424 170.3 L423 170.3 L423 170.4 L422 170.4 L422 173.3 L421 173.3 L421 173.1 L420 173.1 L420 168.5 L419 168.5 L419 170.2 L418 170.2 L418 167.8 L417 167.8 L417 169.0 L416 169.0 L416 170.2 L415 170.2 L415 175.7 L414 175.7 L414 180.2 L413 180.2 L413 177.4 L412 177.4 L412 176.6 L411 176.6 L411 177.4 L410 177.4 L410 180.0 L409 180.0 L409 180.2 L408 180.2 L408 167.5 L407 167.5 L407 159.6 L406 159.6 L406 159.6 L405 159.6 L405 159.6 L404 159.6 L404 159.6 L403 159.6 L403 159.6 L402 159.6 L402 165.6 L401 165.6 L401 176.6 L400 176.6 L400 183.3 L399 183.3 L399 181.2 L398 181.2 L398 180.9 L397 180.9 L397 180.7 L396 180.7 L396 180.7 L395 180.7 L395 179.8 L394 179.8 L394 178.7 L393 178.7 L393 176.6 L392 176.6 L392 180.7 L391 180.7 L391 180.3 L390 180.3 L390 178.1 L389 178.1 L389 177.8 L388 177.8 L388 174.8 L387 174.8 L387 172.9 L386 172.9 L386 174.8 L385 174.8 L385 179.2 L384 179.2 L384 182.8 L383 182.8 L383 180.8 L382 180.8 L382 178.0 L381 178.0 L381 175.2 L380 175.2 L380 169.0 L379 169.0 L379 169.6 L378 169.6 L378 173.6 L377 173.6 L377 179.1 L376 179.1 L376 178.7 L375 178.7 L375 180.3 L374 180.3 L374 175.5 L373 175.5 L373 174.4 L372 174.4 L372 165.6 L371 165.6 L371 159.6 L370 159.6 L370 159.6 L369 159.6 L369 159.6 L368 159.6 L368 159.6 L367 159.6 L367 159.6 L366 159.6 L366 159.6 L365 159.6 L365 159.6 L364 159.6 L364 159.6 L363 159.6 L363 159.6 L362 159.6 L362 159.6 L361 159.6 L361 159.6 L360 159.6 L360 159.6 L359 159.6 L359 159.6 L358 159.6 L358 159.6 L357 159.6 L357 159.6 L356 159.6 L356 159.6 L355 159.6 L355 159.6 L354 159.6 L354 159.6 L353 159.6 L353 159.6 L352 159.6 L352 159.6 L351 159.6 L351 159.6 L350 159.6 L350 159.6 L349 159.6 L349 159.6 L348 159.6 L348 159.6 L347 159.6 L347 159.6 L346 159.6 L346 159.6 L345 159.6 L345 159.6 L344 159.6 L344 161.6 L343 161.6 L343 167.8 L342 167.8 L342 174.3 L341 174.3 L341 178.0 L340 178.0 L340 178.3 L339 178.3 L339 179.3 L338 179.3 L338 179.9 L337 179.9 L337 176.6 L336 176.6 L336 178.2 L335 178.2 L335 178.0 L334 178.0 L334 175.5 L333 175.5 L333 175.5 L332 175.5 L332 170.8 L331 170.8 L331 167.2 L330 167.2 L330 164.9 L329 164.9 L329 163.8 L328 163.8 L328 166.1 L327 166.1 L327 175.3 L326 175.3 L326 172.9 L325 172.9 L325 167.6 L324 167.6 L324 163.4 L323 163.4 L323 164.6 L322 164.6 L322 166.4 L321 166.4 L321 174.8 L320 174.8 L320 170.9 L319 170.9 L319 165.4 L318 165.4 L318 165.0 L317 165.0 L317 166.0 L316 166.0 L316 166.0 L315 166.0 L315 167.0 L314 167.0 L314 169.4 L313 169.4 L313 173.4 L312 173.4 L312 176.9 L311 176.9 L311 175.5 L310 175.5 L310 173.3 L309 173.3 L309 174.4 L308 174.4 L308 173.0 L307 173.0 L307 172.2 L306 172.2 L306 170.9 L305 170.9 L305 171.0 L304 171.0 L304 170.8 L303 170.8 L303 170.2 L302 170.2 L302 171.4 L301 171.4 L301 171.5 L300 171.5 L300 172.7 L299 172.7 L299 169.2 L298 169.2 L298 166.2 L297 166.2 L297 166.9 L296 166.9 L296 171.0 L295 171.0 L295 172.8 L294 172.8 L294 177.5 L293 177.5 L293 175.2 L292 175.2 L292 171.4 L291 171.4 L291 161.2 L290 161.2 L290 159.6 L289 159.6 L289 159.6 L288 159.6 L288 159.6 L287 159.6 L287 159.6 L286 159.6 L286 159.6 L285 159.6 L285 159.6 L284 159.6 L284 159.6 L283 159.6 L283 159.6 L282 159.6 L282 159.6 L281 159.6 L281 159.6 L280 159.6 L280 159.6 L279 159.6 L279 159.6 L278 159.6 L278 159.6 L277 159.6 L277 159.6 L276 159.6 L276 159.6 L275 159.6 L275 159.6 L274 159.6 L274 159.6 L273 159.6 L273 159.6 L272 159.6 L272 159.6 L271 159.6 L271 159.6 L270 159.6 L270 159.6 L269 159.6 L269 159.6 L268 159.6 L268 159.6 L267 159.6 L267 159.6 L266 159.6 L266 159.6 L265 159.6 L265 159.6 L264 159.6 L264 160.0 L263 160.0 L263 160.7 L262 160.7 L262 161.4 L261 161.4 L261 161.4 L260 161.4 L260 160.7 L259 160.7 L259 160.0 L258 160.0 L258 160.0 L257 160.0 L257 160.7 L256 160.7 L256 161.4 L255 161.4 L255 161.4 L254 161.4 L254 160.7 L253 160.7 L253 160.0 L252 160.0 L252 162.1 L251 162.1 L251 166.1 L250 166.1 L250 170.0 L249 170.0 L249 169.2 L248 169.2 L248 167.4 L247 167.4 L247 167.0 L246 167.0 L246 166.1 L245 166.1 L245 168.7 L244 168.7 L244 174.7 L243 174.7 L243 175.1 L242 175.1 L242 176.2 L241 176.2 L241 177.4 L240 177.4 L240 170.3 L239 170.3 L239 165.0 L238 165.0 L238 165.9 L237 165.9 L237 165.9 L236 165.9 L236 167.2 L235 167.2 L235 167.9 L234 167.9 L234 166.9 L233 166.9 L233 168.4 L232 168.4 L232 169.6 L231 169.6 L231 175.8 L230 175.8 L230 177.2 L229 177.2 L229 177.5 L228 177.5 L228 177.3 L227 177.3 L227 176.2 L226 176.2 L226 175.2 L225 175.2 L225 176.8 L224 176.8 L224 178.2 L223 178.2 L223 179.8 L222 179.8 L222 168.2 L221 168.2 L221 159.6 L220 159.6 L220 159.6 L219 159.6 L219 159.6 L218 159.6 L218 159.6 L217 159.6 L217 159.6 L216 159.6 L216 159.6 L215 159.6 L215 159.6 L214 159.6 L214 159.6 L213 159.6 L213 159.6 L212 159.6 L212 159.6 L211 159.6 L211 159.6 L210 159.6 L210 159.6 L209 159.6 L209 159.6 L208 159.6 L208 159.6 L207 159.6 L207 159.6 L206 159.6 L206 159.6 L205 159.6 L205 159.6 L204 159.6 L204 159.6 L203 159.6 L203 159.6 L202 159.6 L202 159.6 L201 159.6 L201 167.4 L200 167.4 L200 176.7 L199 176.7 L199 180.3 L198 180.3 L198 177.9 L197 177.9 L197 178.3 L196 178.3 L196 183.8 L195 183.8 L195 174.4 L194 174.4 L194 168.2 L193 168.2 L193 159.6 L192 159.6 L192 160.0 L191 160.0 L191 160.5 L190 160.5 L190 160.9 L189 160.9 L189 161.3 L188 161.3 L188 161.8 L187 161.8 L187 161.9 L186 161.9 L186 162.1 L185 162.1 L185 169.0 L184 169.0 L184 176.4 L183 176.4 L183 175.0 L182 175.0 L182 175.1 L181 175.1 L181 177.7 L180 177.7 L180 169.8 L179 169.8 L179 169.5 L178 169.5 L178 172.4 L177 172.4 L177 173.9 L176 173.9 L176 174.1 L175 174.1 L175 172.0 L174 172.0 L174 167.7 L173 167.7 L173 164.5 L172 164.5 L172 165.3 L171 165.3 L171 163.8 L170 163.8 L170 163.9 L169 163.9 L169 164.2 L168 164.2 L168 163.4 L167 163.4 L167 163.1 L166 163.1 L166 162.8 L165 162.8 L165 162.0 L164 162.0 L164 161.4 L163 161.4 L163 160.8 L162 160.8 L162 160.0 L161 160.0 L161 164.5 L160 164.5 L160 169.3 L159 169.3 L159 169.7 L158 169.7 L158 171.2 L157 171.2 L157 168.9 L156 168.9 L156 166.9 L155 166.9 L155 162.2 L154 162.2 L154 159.6 L153 159.6 L153 165.9 L152 165.9 L152 172.4 L151 172.4 L151 176.7 L150 176.7 L150 175.4 L149 175.4 L149 176.1 L148 176.1 L148 176.9 L147 176.9 L147 175.0 L146 175.0 L146 172.1 L145 172.1 L145 175.0 L144 175.0 L144 174.3 L143 174.3 L143 173.3 L142 173.3 L142 173.7 L141 173.7 L141 174.4 L140 174.4 L140 174.1 L139 174.1 L139 174.0 L138 174.0 L138 172.6 L137 172.6 L137 169.9 L136 169.9 L136 169.3 L135 169.3 L135 169.2 L134 169.2 L134 169.8 L133 169.8 L133 168.7 L132 168.7 L132 168.8 L131 168.8 L131 168.1 L130 168.1 L130 172.1 L129 172.1 L129 177.2 L128 177.2 L128 174.7 L127 174.7 L127 174.6 L126 174.6 L126 173.5 L125 173.5 L125 172.4 L124 172.4 L124 178.2 L123 178.2 L123 175.2 L122 175.2 L122 176.3 L121 176.3 L121 174.4 L120 174.4 L120 175.0 L119 175.0 L119 177.2 L118 177.2 L118 178.1 L117 178.1 L117 176.8 L116 176.8 L116 179.2 L115 179.2 L115 181.4 L114 181.4 L114 177.4 L113 177.4 L113 175.7 L112 175.7 L112 174.7 L111 174.7 L111 170.7 L110 170.7 L110 169.8 L109 169.8 L109 167.0 L108 167.0 L108 159.6 L107 159.6 L107 159.6 L106 159.6 L106 159.6 L105 159.6 L105 159.6 L104 159.6 L104 159.6 L103 159.6 L103 159.6 L102 159.6 L102 159.6 L101 159.6 L101 159.6 L100 159.6 L100 159.6 L99 159.6 L99 159.6 L98 159.6 L98 159.6 L97 159.6 L97 159.6 L96 159.6 L96 159.6 L95 159.6 L95 159.6 L94 159.6 L94 159.6 L93 159.6 L93 159.6 L92 159.6 L92 159.6 L91 159.6 L91 159.6 L90 159.6 L90 159.6 L89 159.6 L89 159.6 L88 159.6 L88 158.5 L87 158.5 L87 158.5 L86 158.5 L86 158.5 L85 158.5 L85 158.5 L84 158.5 L84 158.5 L83 158.5 Z" fill="#000"/>
<path d="M199 237.5 L199 229.2 L200 229.2 L200 232.6 L201 232.6 L201 231.7 L202 231.7 L202 233.0 L203 233.0 L203 233.2 L204 233.2 L204 232.8 L205 232.8 L205 233.3 L206 233.3 L206 232.5 L207 232.5 L207 232.5 L208 232.5 L208 232.9 L209 232.9 L209 232.6 L210 232.6 L210 231.7 L211 231.7 L211 231.5 L212 231.5 L212 230.6 L213 230.6 L213 230.7 L214 230.7 L214 229.8 L215 229.8 L215 230.1 L216 230.1 L216 230.5 L217 230.5 L217 231.2 L218 231.2 L218 230.5 L219 230.5 L219 232.1 L220 232.1 L220 231.5 L221 231.5 L221 231.4 L222 231.4 L222 231.4 L223 231.4 L223 230.2 L224 230.2 L224 230.4 L225 230.4 L225 228.7 L226 228.7 L226 228.6 L227 228.6 L227 228.0 L228 228.0 L228 225.0 L229 225.0 L229 224.9 L230 224.9 L230 225.9 L231 225.9 L231 228.2 L232 228.2 L232 227.6 L233 227.6 L233 226.4 L234 226.4 L234 229.2 L235 229.2 L235 228.8 L236 228.8 L236 229.9 L237 229.9 L237 229.8 L238 229.8 L238 228.9 L239 228.9 L239 226.1 L240 226.1 L240 221.6 L241 221.6 L241 221.8 L242 221.8 L242 223.9 L243 223.9 L243 226.1 L244 226.1 L244 225.8 L245 225.8 L245 229.5 L246 229.5 L246 230.6 L247 230.6 L247 230.0 L248 230.0 L248 230.4 L249 230.4 L249 231.2 L250 231.2 L250 229.7 L251 229.7 L251 229.3 L252 229.3 L252 228.8 L253 228.8 L253 226.1 L254 226.1 L254 225.4 L255 225.4 L255 226.3 L256 226.3 L256 225.7 L257 225.7 L257 227.6 L258 227.6 L258 228.0 L259 228.0 L259 226.1 L260 226.1 L260 225.8 L261 225.8 L261 226.1 L262 226.1 L262 226.9 L263 226.9 L263 229.5 L264 229.5 L264 230.0 L265 230.0 L265 229.1 L266 229.1 L266 226.2 L267 226.2 L267 225.2 L268 225.2 L268 221.3 L269 221.3 L269 223.0 L270 223.0 L270 222.1 L271 222.1 L271 225.0 L272 225.0 L272 225.7 L273 225.7 L273 229.0 L274 229.0 L274 229.7 L275 229.7 L275 229.1 L276 229.1 L276 229.8 L277 229.8 L277 227.5 L278 227.5 L278 229.6 L279 229.6 L279 229.6 L280 229.6 L280 229.5 L281 229.5 L281 228.7 L282 228.7 L282 228.8 L283 228.8 L283 227.9 L284 227.9 L284 226.4 L285 226.4 L285 228.3 L286 228.3 L286 227.7 L287 227.7 L287 227.1 L288 227.1 L288 229.6 L289 229.6 L289 229.8 L290 229.8 L290 229.7 L291 229.7 L291 228.0 L292 228.0 L292 229.2 L293 229.2 L293 229.5 L294 229.5 L294 228.7 L295 228.7 L295 227.0 L296 227.0 L296 227.6 L297 227.6 L297 226.7 L298 226.7 L298 226.6 L299 226.6 L299 227.2 L300 227.2 L300 225.9 L301 225.9 L301 227.4 L302 227.4 L302 227.8 L303 227.8 L303 228.3 L304 228.3 L304 229.0 L305 229.0 L305 229.1 L306 229.1 L306 227.6 L307 227.6 L307 226.2 L308 226.2 L308 224.6 L309 224.6 L309 225.3 L310 225.3 L310 224.5 L311 224.5 L311 223.8 L312 223.8 L312 224.5 L313 224.5 L313 226.4 L314 226.4 L314 222.3 L315 222.3 L315 226.2 L316 226.2 L316 225.8 L317 225.8 L317 225.7 L318 225.7 L318 225.0 L319 225.0 L319 227.1 L320 227.1 L320 228.0 L321 228.0 L321 229.5 L322 229.5 L322 228.4 L323 228.4 L323 226.9 L324 226.9 L324 221.1 L325 221.1 L325 223.6 L326 223.6 L326 221.1 L327 221.1 L327 222.6 L328 222.6 L328 223.3 L329 223.3 L329 223.9 L330 223.9 L330 224.8 L331 224.8 L331 224.9 L332 224.9 L332 224.9 L333 224.9 L333 224.7 L334 224.7 L334 225.4 L335 225.4 L335 226.4 L336 226.4 L336 228.0 L337 228.0 L337 228.7 L338 228.7 L338 225.7 L339 225.7 L339 225.7 L340 225.7 L340 224.9 L341 224.9 L341 226.0 L342 226.0 L342 226.1 L343 226.1 L343 227.4 L344 227.4 L344 226.3 L345 226.3 L345 226.6 L346 226.6 L346 223.8 L347 223.8 L347 222.2 L348 222.2 L348 223.9 L349 223.9 L349 226.7 L350 226.7 L350 225.8 L351 225.8 L351 224.4 L352 224.4 L352 217.4 L353 217.4 L353 220.9 L354 220.9 L354 220.8 L355 220.8 L355 224.0 L356 224.0 L356 226.6 L357 226.6 L357 226.8 L358 226.8 L358 226.1 L359 226.1 L359 227.8 L360 227.8 L360 228.1 L361 228.1 L361 227.5 L362 227.5 L362 230.0 L363 230.0 L363 229.6 L364 229.6 L364 227.1 L365 227.1 L365 226.5 L366 226.5 L366 226.5 L367 226.5 L367 225.5 L368 225.5 L368 225.4 L369 225.4 L369 226.9 L370 226.9 L370 228.1 L371 228.1 L371 228.0 L372 228.0 L372 225.7 L373 225.7 L373 225.9 L374 225.9 L374 226.3 L375 226.3 L375 226.3 L376 226.3 L376 225.5 L377 225.5 L377 224.8 L378 224.8 L378 225.4 L379 225.4 L379 224.2 L380 224.2 L380 225.4 L381 225.4 L381 225.1 L382 225.1 L382 226.1 L383 226.1 L383 228.1 L384 228.1 L384 228.2 L385 228.2 L385 227.7 L386 227.7 L386 227.5 L387 227.5 L387 228.4 L388 228.4 L388 228.9 L389 228.9 L389 228.1 L390 228.1 L390 228.2 L391 228.2 L391 224.5 L392 224.5 L392 221.5 L393 221.5 L393 223.2 L394 223.2 L394 222.8 L395 222.8 L395 224.1 L396 224.1 L396 224.9 L397 224.9 L397 221.2 L398 221.2 L398 225.9 L399 225.9 L399 227.2 L400 227.2 L400 228.8 L401 228.8 L401 229.5 L402 229.5 L402 229.5 L403 229.5 L403 228.1 L404 228.1 L404 222.2 L405 222.2 L405 223.1 L406 223.1 L406 223.6 L407 223.6 L407 223.4 L408 223.4 L408 223.7 L409 223.7 L409 224.6 L410 224.6 L410 225.0 L411 225.0 L411 225.6 L412 225.6 L412 225.9 L413 225.9 L413 226.8 L414 226.8 L414 228.6 L415 228.6 L415 227.5 L416 227.5 L416 229.1 L417 229.1 L417 228.7 L418 228.7 L418 225.6 L419 225.6 L419 223.8 L420 223.8 L420 220.7 L421 220.7 L421 221.1 L422 221.1 L422 223.0 L423 223.0 L423 222.8 L424 222.8 L424 224.6 L425 224.6 L425 223.7 L426 223.7 L426 226.5 L427 226.5 L427 227.1 L428 227.1 L428 228.4 L429 228.4 L429 229.0 L430 229.0 L430 228.3 L431 228.3 L431 227.6 L432 227.6 L432 226.8 L433 226.8 L433 225.0 L434 225.0 L434 224.2 L435 224.2 L435 224.3 L436 224.3 L436 226.0 L437 226.0 L437 227.8 L438 227.8 L438 228.6 L439 228.6 L439 228.2 L440 228.2 L440 226.6 L441 226.6 L441 227.7 L442 227.7 L442 226.3 L443 226.3 L443 228.7 L444 228.7 L444 229.1 L445 229.1 L445 229.1 L446 229.1 L446 226.8 L447 226.8 L447 226.3 L448 226.3 L448 227.3 L449 227.3 L449 227.2 L450 227.2 L450 228.9 L451 228.9 L451 229.9 L452 229.9 L452 230.6 L453 230.6 L453 228.5 L454 228.5 L454 227.8 L455 227.8 L455 227.7 L456 227.7 L456 228.9 L457 228.9 L457 229.9 L458 229.9 L458 229.1 L459 229.1 L459 227.7 L460 227.7 L460 224.7 L461 224.7 L461 221.2 L462 221.2 L462 222.0 L463 222.0 L463 224.0 L464 224.0 L464 225.0 L465 225.0 L465 227.2 L466 227.2 L466 227.9 L467 227.9 L467 228.3 L468 228.3 L468 229.9 L469 229.9 L469 229.8 L470 229.8 L470 229.4 L471 229.4 L471 228.6 L472 228.6 L472 225.9 L473 225.9 L473 227.1 L474 227.1 L474 226.0 L475 226.0 L475 225.1 L476 225.1 L476 228.1 L477 228.1 L477 230.0 L478 230.0 L478 230.2 L479 230.2 L479 227.7 L480 227.7 L480 226.7 L481 226.7 L481 226.3 L482 226.3 L482 228.6 L483 228.6 L483 229.7 L484 229.7 L484 230.9 L485 230.9 L485 231.0 L486 231.0 L486 229.7 L487 229.7 L487 223.8 L488 223.8 L488 220.3 L489 220.3 L489 217.6 L490 217.6 L490 220.0 L491 220.0 L491 222.6 L492 222.6 L492 225.0 L493 225.0 L493 224.0 L494 224.0 L494 224.1 L495 224.1 L495 218.8 L496 218.8 L496 222.0 L497 222.0 L497 224.4 L498 224.4 L498 225.2 L499 225.2 L499 226.8 L500 226.8 L500 223.2 L501 223.2 L501 225.2 L502 225.2 L502 224.7 L503 224.7 L503 224.3 L504 224.3 L504 223.9 L505 223.9 L505 224.0 L506 224.0 L506 226.0 L507 226.0 L507 225.4 L508 225.4 L508 227.5 L509 227.5 L509 228.7 L510 228.7 L510 229.1 L511 229.1 L511 230.1 L512 230.1 L512 228.0 L513 228.0 L513 226.4 L514 226.4 L514 224.6 L515 224.6 L515 223.3 L516 223.3 L516 221.9 L517 221.9 L517 223.8 L518 223.8 L518 225.1 L519 225.1 L519 224.7 L520 224.7 L520 225.9 L521 225.9 L521 226.8 L522 226.8 L522 225.8 L523 225.8 L523 226.4 L524 226.4 L524 226.5 L525 226.5 L525 224.0 L526 224.0 L526 226.1 L527 226.1 L527 225.8 L528 225.8 L528 224.0 L529 224.0 L529 220.9 L530 220.9 L530 222.5 L531 222.5 L531 221.2 L532 221.2 L532 221.1 L533 221.1 L533 221.6 L534 221.6 L534 223.8 L535 223.8 L535 223.0 L536 223.0 L536 225.9 L537 225.9 L537 224.9 L538 224.9 L538 225.8 L539 225.8 L539 224.5 L540 224.5 L540 225.4 L541 225.4 L541 222.5 L542 222.5 L542 221.0 L543 221.0 L543 221.0 L544 221.0 L544 218.5 L545 218.5 L545 224.0 L546 224.0 L546 224.3 L547 224.3 L547 224.3 L548 224.3 L548 224.1 L549 224.1 L549 221.8 L550 221.8 L550 223.7 L551 223.7 L551 225.0 L552 225.0 L552 224.7 L553 224.7 L553 219.6 L554 219.6 L554 223.4 L555 223.4 L555 221.5 L556 221.5 L556 221.8 L557 221.8 L557 221.6 L558 221.6 L558 225.2 L559 225.2 L559 227.6 L560 227.6 L560 230.1 L561 230.1 L561 227.6 L562 227.6 L562 226.6 L563 226.6 L563 225.5 L564 225.5 L564 226.8 L565 226.8 L565 226.0 L566 226.0 L566 224.8 L567 224.8 L567 226.2 L568 226.2 L568 224.2 L569 224.2 L569 225.6 L570 225.6 L570 225.9 L571 225.9 L571 226.4 L572 226.4 L572 226.5 L573 226.5 L573 227.2 L574 227.2 L574 227.3 L575 227.3 L575 228.8 L576 228.8 L576 226.8 L577 226.8 L577 223.4 L578 223.4 L578 221.0 L579 221.0 L579 224.8 L580 224.8 L580 223.2 L581 223.2 L581 224.0 L582 224.0 L582 225.0 L583 225.0 L583 223.3 L584 223.3 L584 218.2 L585 218.2 L585 220.5 L586 220.5 L586 221.6 L587 221.6 L587 222.3 L588 222.3 L588 224.0 L589 224.0 L589 224.7 L590 224.7 L590 223.9 L591 223.9 L591 225.2 L592 225.2 L592 225.9 L593 225.9 L593 228.9 L594 228.9 L594 227.9 L595 227.9 L595 225.3 L596 225.3 L596 223.9 L597 223.9 L597 220.7 L598 220.7 L598 218.8 L599 218.8 L599 216.6 L600 216.6 L600 221.3 L601 221.3 L601 222.8 L602 222.8 L602 223.8 L603 223.8 L603 223.2 L604 223.2 L604 225.3 L605 225.3 L605 224.1 L606 224.1 L606 223.0 L607 223.0 L607 223.6 L608 223.6 L608 224.8 L609 224.8 L609 223.6 L610 223.6 L610 226.0 L611 226.0 L611 225.6 L612 225.6 L612 227.4 L613 227.4 L613 226.9 L614 226.9 L614 228.5 L615 228.5 L615 227.2 L616 227.2 L616 226.7 L617 226.7 L617 226.5 L618 226.5 L618 222.9 L619 222.9 L619 222.8 L620 222.8 L620 224.0 L621 224.0 L621 221.4 L622 221.4 L622 223.0 L623 223.0 L623 223.9 L624 223.9 L624 224.1 L625 224.1 L625 224.5 L626 224.5 L626 223.2 L627 223.2 L627 226.4 L628 226.4 L628 227.1 L629 227.1 L629 226.7 L630 226.7 L630 226.6 L631 226.6 L631 226.3 L632 226.3 L632 224.6 L633 224.6 L633 225.4 L634 225.4 L634 225.1 L635 225.1 L635 223.3 L636 223.3 L636 223.0 L637 223.0 L637 222.7 L638 222.7 L638 218.6 L639 218.6 L639 225.8 L640 225.8 L640 225.5 L641 225.5 L641 228.6 L642 228.6 L642 228.6 L643 228.6 L643 228.4 L644 228.4 L644 230.5 L645 230.5 L645 230.2 L646 230.2 L646 224.4 L647 224.4 L647 225.9 L648 225.9 L648 223.8 L649 223.8 L649 222.4 L650 222.4 L650 223.5 L651 223.5 L651 220.7 L652 220.7 L652 222.5 L653 222.5 L653 223.1 L654 223.1 L654 225.0 L655 225.0 L655 226.7 L656 226.7 L656 224.1 L657 224.1 L657 225.9 L658 225.9 L658 225.9 L659 225.9 L659 223.6 L660 223.6 L660 224.4 L661 224.4 L661 224.2 L662 224.2 L662 224.1 L663 224.1 L663 224.3 L664 224.3 L664 226.3 L665 226.3 L665 227.8 L666 227.8 L666 226.2 L667 226.2 L667 222.1 L668 222.1 L668 222.5 L669 222.5 L669 223.8 L670 223.8 L670 225.5 L671 225.5 L671 223.6 L672 223.6 L672 225.6 L673 225.6 L673 225.7 L674 225.7 L674 224.2 L675 224.2 L675 222.4 L676 222.4 L676 221.3 L677 221.3 L677 221.1 L678 221.1 L678 218.4 L679 218.4 L679 217.7 L680 217.7 L680 221.4 L681 221.4 L681 220.9 L682 220.9 L682 223.7 L683 223.7 L683 224.2 L684 224.2 L684 225.9 L685 225.9 L685 225.3 L686 225.3 L686 226.0 L687 226.0 L687 225.7 L688 225.7 L688 226.2 L689 226.2 L689 226.2 L690 226.2 L690 224.1 L691 224.1 L691 224.0 L692 224.0 L692 225.0 L693 225.0 L693 222.5 L694 222.5 L694 222.3 L695 222.3 L695 225.5 L696 225.5 L696 224.6 L697 224.6 L697 227.9 L698 227.9 L698 227.5 L699 227.5 L699 225.8 L700 225.8 L700 224.8 L701 224.8 L701 225.4 L702 225.4 L702 223.4 L703 223.4 L703 223.4 L704 223.4 L704 223.5 L705 223.5 L705 237.5 L705 249.8 L704 249.8 L704 253.2 L703 253.2 L703 251.7 L702 251.7 L702 250.9 L701 250.9 L701 248.7 L700 248.7 L700 249.6 L699 249.6 L699 247.2 L698 247.2 L698 249.3 L697 249.3 L697 249.6 L696 249.6 L696 250.3 L695 250.3 L695 255.8 L694 255.8 L694 253.6 L693 253.6 L693 252.0 L692 252.0 L692 250.2 L691 250.2 L691 249.0 L690 249.0 L690 249.3 L689 249.3 L689 249.9 L688 249.9 L688 249.6 L687 249.6 L687 250.9 L686 250.9 L686 249.3 L685 249.3 L685 249.7 L684 249.7 L684 251.9 L683 251.9 L683 252.8 L682 252.8 L682 254.0 L681 254.0 L681 254.2 L680 254.2 L680 254.9 L679 254.9 L679 257.0 L678 257.0 L678 255.0 L677 255.0 L677 254.4 L676 254.4 L676 253.6 L675 253.6 L675 251.6 L674 251.6 L674 248.0 L673 248.0 L673 248.7 L672 248.7 L672 248.8 L671 248.8 L671 249.4 L670 249.4 L670 254.5 L669 254.5 L669 251.2 L668 251.2 L668 251.8 L667 251.8 L667 248.7 L666 248.7 L666 247.4 L665 247.4 L665 247.1 L664 247.1 L664 248.7 L663 248.7 L663 248.5 L662 248.5 L662 249.4 L661 249.4 L661 251.6 L660 251.6 L660 251.2 L659 251.2 L659 251.1 L658 251.1 L658 249.1 L657 249.1 L657 248.2 L656 248.2 L656 248.1 L655 248.1 L655 249.6 L654 249.6 L654 250.9 L653 250.9 L653 254.0 L652 254.0 L652 254.7 L651 254.7 L651 253.2 L650 253.2 L650 251.3 L649 251.3 L649 251.7 L648 251.7 L648 248.7 L647 248.7 L647 247.8 L646 247.8 L646 245.9 L645 245.9 L645 244.0 L644 244.0 L644 245.0 L643 245.0 L643 245.3 L642 245.3 L642 246.3 L641 246.3 L641 249.1 L640 249.1 L640 252.3 L639 252.3 L639 253.1 L638 253.1 L638 252.6 L637 252.6 L637 251.2 L636 251.2 L636 251.1 L635 251.1 L635 249.6 L634 249.6 L634 252.7 L633 252.7 L633 250.1 L632 250.1 L632 248.5 L631 248.5 L631 249.3 L630 249.3 L630 247.4 L629 247.4 L629 248.1 L628 248.1 L628 247.6 L627 247.6 L627 248.7 L626 248.7 L626 251.3 L625 251.3 L625 252.6 L624 252.6 L624 252.1 L623 252.1 L623 250.2 L622 250.2 L622 252.9 L621 252.9 L621 250.9 L620 250.9 L620 251.6 L619 251.6 L619 249.2 L618 249.2 L618 251.6 L617 251.6 L617 248.0 L616 248.0 L616 247.4 L615 247.4 L615 247.3 L614 247.3 L614 247.9 L613 247.9 L613 250.4 L612 250.4 L612 249.9 L611 249.9 L611 248.8 L610 248.8 L610 251.8 L609 251.8 L609 250.8 L608 250.8 L608 251.1 L607 251.1 L607 252.8 L606 252.8 L606 251.5 L605 251.5 L605 251.5 L604 251.5 L604 252.5 L603 252.5 L603 252.9 L602 252.9 L602 254.0 L601 254.0 L601 254.6 L600 254.6 L600 255.3 L599 255.3 L599 257.1 L598 257.1 L598 253.9 L597 253.9 L597 251.9 L596 251.9 L596 248.4 L595 248.4 L595 247.3 L594 247.3 L594 247.3 L593 247.3 L593 248.8 L592 248.8 L592 248.5 L591 248.5 L591 251.5 L590 251.5 L590 252.3 L589 252.3 L589 251.8 L588 251.8 L588 251.7 L587 251.7 L587 253.8 L586 253.8 L586 253.1 L585 253.1 L585 252.5 L584 252.5 L584 250.6 L583 250.6 L583 250.6 L582 250.6 L582 252.3 L581 252.3 L581 251.2 L580 251.2 L580 250.7 L579 250.7 L579 252.3 L578 252.3 L578 250.8 L577 250.8 L577 247.0 L576 247.0 L576 245.7 L575 245.7 L575 248.0 L574 248.0 L574 249.0 L573 249.0 L573 248.0 L572 248.0 L572 249.8 L571 249.8 L571 249.7 L570 249.7 L570 250.6 L569 250.6 L569 251.0 L568 251.0 L568 250.8 L567 250.8 L567 249.2 L566 249.2 L566 250.1 L565 250.1 L565 248.2 L564 248.2 L564 247.8 L563 247.8 L563 246.7 L562 246.7 L562 246.1 L561 246.1 L561 247.2 L560 247.2 L560 247.4 L559 247.4 L559 250.4 L558 250.4 L558 251.6 L557 251.6 L557 252.3 L556 252.3 L556 251.7 L555 251.7 L555 252.3 L554 252.3 L554 253.3 L553 253.3 L553 251.2 L552 251.2 L552 250.5 L551 250.5 L551 251.6 L550 251.6 L550 251.2 L549 251.2 L549 248.8 L548 248.8 L548 253.3 L547 253.3 L547 251.9 L546 251.9 L546 254.1 L545 254.1 L545 254.8 L544 254.8 L544 255.9 L543 255.9 L543 254.2 L542 254.2 L542 252.9 L541 252.9 L541 251.9 L540 251.9 L540 250.1 L539 250.1 L539 248.0 L538 248.0 L538 248.5 L537 248.5 L537 249.7 L536 249.7 L536 251.6 L535 251.6 L535 252.5 L534 252.5 L534 252.7 L533 252.7 L533 254.3 L532 254.3 L532 253.3 L531 253.3 L531 255.1 L530 255.1 L530 253.7 L529 253.7 L529 250.9 L528 250.9 L528 253.7 L527 253.7 L527 248.0 L526 248.0 L526 249.3 L525 249.3 L525 248.3 L524 248.3 L524 248.4 L523 248.4 L523 248.4 L522 248.4 L522 247.9 L521 247.9 L521 248.0 L520 248.0 L520 249.7 L519 249.7 L519 250.0 L518 250.0 L518 250.4 L517 250.4 L517 250.4 L516 250.4 L516 250.5 L515 250.5 L515 249.1 L514 249.1 L514 249.9 L513 249.9 L513 246.4 L512 246.4 L512 245.1 L511 245.1 L511 246.0 L510 246.0 L510 247.3 L509 247.3 L509 250.4 L508 250.4 L508 248.8 L507 248.8 L507 249.0 L506 249.0 L506 249.9 L505 249.9 L505 254.4 L504 254.4 L504 253.0 L503 253.0 L503 250.5 L502 250.5 L502 249.7 L501 249.7 L501 247.4 L500 247.4 L500 248.9 L499 248.9 L499 249.4 L498 249.4 L498 251.4 L497 251.4 L497 251.4 L496 251.4 L496 250.6 L495 250.6 L495 250.4 L494 250.4 L494 252.2 L493 252.2 L493 251.9 L492 251.9 L492 253.0 L491 253.0 L491 253.7 L490 253.7 L490 257.3 L489 257.3 L489 255.7 L488 255.7 L488 250.9 L487 250.9 L487 246.2 L486 246.2 L486 243.3 L485 243.3 L485 244.6 L484 244.6 L484 246.6 L483 246.6 L483 246.9 L482 246.9 L482 249.1 L481 249.1 L481 248.1 L480 248.1 L480 246.4 L479 246.4 L479 245.1 L478 245.1 L478 247.3 L477 247.3 L477 246.2 L476 246.2 L476 248.0 L475 248.0 L475 248.7 L474 248.7 L474 248.5 L473 248.5 L473 247.5 L472 247.5 L472 245.6 L471 245.6 L471 244.9 L470 244.9 L470 244.2 L469 244.2 L469 245.3 L468 245.3 L468 245.0 L467 245.0 L467 245.6 L466 245.6 L466 246.5 L465 246.5 L465 248.5 L464 248.5 L464 254.0 L463 254.0 L463 252.2 L462 252.2 L462 253.2 L461 253.2 L461 250.5 L460 250.5 L460 246.7 L459 246.7 L459 245.7 L458 245.7 L458 245.6 L457 245.6 L457 247.0 L456 247.0 L456 247.9 L455 247.9 L455 247.7 L454 247.7 L454 246.2 L453 246.2 L453 245.1 L452 245.1 L452 244.4 L451 244.4 L451 246.6 L450 246.6 L450 246.6 L449 246.6 L449 247.3 L448 247.3 L448 248.3 L447 248.3 L447 247.0 L446 247.0 L446 247.0 L445 247.0 L445 246.1 L444 246.1 L444 246.8 L443 246.8 L443 248.5 L442 248.5 L442 248.8 L441 248.8 L441 246.9 L440 246.9 L440 246.7 L439 246.7 L439 246.4 L438 246.4 L438 246.4 L437 246.4 L437 249.3 L436 249.3 L436 251.0 L435 251.0 L435 252.0 L434 252.0 L434 250.3 L433 250.3 L433 247.9 L432 247.9 L432 248.2 L431 248.2 L431 247.9 L430 247.9 L430 246.7 L429 246.7 L429 248.2 L428 248.2 L428 250.0 L427 250.0 L427 249.1 L426 249.1 L426 251.1 L425 251.1 L425 249.9 L424 249.9 L424 252.6 L423 252.6 L423 254.5 L422 254.5 L422 253.6 L421 253.6 L421 253.0 L420 253.0 L420 252.3 L419 252.3 L419 249.2 L418 249.2 L418 247.1 L417 247.1 L417 245.7 L416 245.7 L416 246.6 L415 246.6 L415 246.8 L414 246.8 L414 247.3 L413 247.3 L413 247.6 L412 247.6 L412 248.5 L411 248.5 L411 249.1 L410 249.1 L410 249.3 L409 249.3 L409 253.1 L408 253.1 L408 252.0 L407 252.0 L407 253.9 L406 253.9 L406 252.5 L405 252.5 L405 249.4 L404 249.4 L404 247.5 L403 247.5 L403 247.2 L402 247.2 L402 246.4 L401 246.4 L401 247.0 L400 247.0 L400 249.9 L399 249.9 L399 250.0 L398 250.0 L398 250.5 L397 250.5 L397 251.6 L396 251.6 L396 250.8 L395 250.8 L395 251.1 L394 251.1 L394 252.8 L393 252.8 L393 252.4 L392 252.4 L392 251.3 L391 251.3 L391 247.3 L390 247.3 L390 246.2 L389 246.2 L389 246.5 L388 246.5 L388 246.7 L387 246.7 L387 246.1 L386 246.1 L386 248.1 L385 248.1 L385 247.1 L384 247.1 L384 248.2 L383 248.2 L383 249.6 L382 249.6 L382 249.6 L381 249.6 L381 250.4 L380 250.4 L380 250.4 L379 250.4 L379 249.9 L378 249.9 L378 250.2 L377 250.2 L377 249.3 L376 249.3 L376 250.8 L375 250.8 L375 248.9 L374 248.9 L374 248.6 L373 248.6 L373 248.1 L372 248.1 L372 250.5 L371 250.5 L371 249.7 L370 249.7 L370 249.0 L369 249.0 L369 251.8 L368 251.8 L368 249.7 L367 249.7 L367 250.6 L366 250.6 L366 248.8 L365 248.8 L365 247.9 L364 247.9 L364 245.7 L363 245.7 L363 246.4 L362 246.4 L362 247.1 L361 247.1 L361 247.7 L360 247.7 L360 249.7 L359 249.7 L359 249.1 L358 249.1 L358 249.5 L357 249.5 L357 249.3 L356 249.3 L356 251.4 L355 251.4 L355 253.2 L354 253.2 L354 254.6 L353 254.6 L353 258.5 L352 258.5 L352 252.7 L351 252.7 L351 248.7 L350 248.7 L350 248.8 L349 248.8 L349 251.1 L348 251.1 L348 252.3 L347 252.3 L347 251.9 L346 251.9 L346 248.5 L345 248.5 L345 248.5 L344 248.5 L344 248.7 L343 248.7 L343 248.6 L342 248.6 L342 249.8 L341 249.8 L341 250.8 L340 250.8 L340 250.1 L339 250.1 L339 247.6 L338 247.6 L338 246.4 L337 246.4 L337 246.6 L336 246.6 L336 249.2 L335 249.2 L335 249.0 L334 249.0 L334 251.0 L333 251.0 L333 249.2 L332 249.2 L332 250.1 L331 250.1 L331 249.8 L330 249.8 L330 249.0 L329 249.0 L329 251.4 L328 251.4 L328 253.1 L327 253.1 L327 252.4 L326 252.4 L326 251.7 L325 251.7 L325 251.7 L324 251.7 L324 248.8 L323 248.8 L323 248.6 L322 248.6 L322 245.2 L321 245.2 L321 248.3 L320 248.3 L320 250.6 L319 250.6 L319 249.3 L318 249.3 L318 249.1 L317 249.1 L317 249.2 L316 249.2 L316 249.0 L315 249.0 L315 249.6 L314 249.6 L314 250.2 L313 250.2 L313 249.8 L312 249.8 L312 249.9 L311 249.9 L311 250.3 L310 250.3 L310 251.6 L309 251.6 L309 248.4 L308 248.4 L308 249.1 L307 249.1 L307 246.7 L306 246.7 L306 245.9 L305 245.9 L305 245.5 L304 245.5 L304 248.2 L303 248.2 L303 248.0 L302 248.0 L302 246.8 L301 246.8 L301 249.1 L300 249.1 L300 249.5 L299 249.5 L299 247.9 L298 247.9 L298 247.5 L297 247.5 L297 247.9 L296 247.9 L296 247.2 L295 247.2 L295 246.1 L294 246.1 L294 247.9 L293 247.9 L293 246.3 L292 246.3 L292 245.0 L291 245.0 L291 244.7 L290 244.7 L290 244.7 L289 244.7 L289 245.7 L288 245.7 L288 246.4 L287 246.4 L287 247.4 L286 247.4 L286 247.8 L285 247.8 L285 248.5 L284 248.5 L284 248.2 L283 248.2 L283 246.8 L282 246.8 L282 245.5 L281 245.5 L281 245.3 L280 245.3 L280 247.3 L279 247.3 L279 244.9 L278 244.9 L278 244.8 L277 244.8 L277 245.3 L276 245.3 L276 245.7 L275 245.7 L275 245.1 L274 245.1 L274 247.5 L273 247.5 L273 251.6 L272 251.6 L272 250.4 L271 250.4 L271 254.7 L270 254.7 L270 253.3 L269 253.3 L269 251.7 L268 251.7 L268 250.1 L267 250.1 L267 246.9 L266 246.9 L266 246.2 L265 246.2 L265 244.9 L264 244.9 L264 245.0 L263 245.0 L263 246.7 L262 246.7 L262 250.5 L261 250.5 L261 249.6 L260 249.6 L260 248.1 L259 248.1 L259 247.5 L258 247.5 L258 247.6 L257 247.6 L257 251.2 L256 251.2 L256 250.3 L255 250.3 L255 250.0 L254 250.0 L254 248.7 L253 248.7 L253 247.0 L252 247.0 L252 245.9 L251 245.9 L251 245.2 L250 245.2 L250 244.3 L249 244.3 L249 244.4 L248 244.4 L248 244.1 L247 244.1 L247 245.5 L246 245.5 L246 246.2 L245 246.2 L245 247.2 L244 247.2 L244 249.4 L243 249.4 L243 249.0 L242 249.0 L242 251.4 L241 251.4 L241 252.5 L240 252.5 L240 250.2 L239 250.2 L239 246.5 L238 246.5 L238 244.4 L237 244.4 L237 245.1 L236 245.1 L236 245.8 L235 245.8 L235 247.1 L234 247.1 L234 247.5 L233 247.5 L233 246.7 L232 246.7 L232 248.0 L231 248.0 L231 247.5 L230 247.5 L230 248.9 L229 248.9 L229 249.4 L228 249.4 L228 247.4 L227 247.4 L227 247.7 L226 247.7 L226 246.5 L225 246.5 L225 245.7 L224 245.7 L224 245.2 L223 245.2 L223 245.9 L222 245.9 L222 243.9 L221 243.9 L221 242.9 L220 242.9 L220 243.2 L219 243.2 L219 243.0 L218 243.0 L218 244.5 L217 244.5 L217 244.6 L216 244.6 L216 245.2 L215 245.2 L215 245.6 L214 245.6 L214 245.8 L213 245.8 L213 243.8 L212 243.8 L212 243.9 L211 243.9 L211 243.1 L210 243.1 L210 243.2 L209 243.2 L209 242.9 L208 242.9 L208 242.2 L207 242.2 L207 241.9 L206 241.9 L206 242.5 L205 242.5 L205 241.7 L204 241.7 L204 242.7 L203 242.7 L203 242.7 L202 242.7 L202 242.3 L201 242.3 L201 243.0 L200 243.0 L200 246.7 L199 246.7 Z" fill="#000"/>
<rect x="15" y="45" width="175" height="1" fill="#008000" />
<line x1="190.5" y1="45" x2="225.5" y2="115" stroke="#008000" stroke-width="1.2"/>
<rect x="186" y="41" width="9" height="8" fill="#008000" />
<rect x="221.5" y="112" width="9" height="6" fill="#008000" />
<rect x="293" y="41" width="1" height="77" fill="#00ffff" />
<path d="M285.0 55.7 L293.5 61.2 L285.0 66.7 Z" fill="#00ffff"/>
<path d="M285.0 92.5 L293.5 98 L285.0 103.5 Z" fill="#00ffff"/>
<rect x="367" y="41" width="1" height="77" fill="#ff0000" />
<path d="M376.0 46.0 L367.5 51 L376.0 56.0 Z" fill="#f00"/>
<path d="M376.0 56.0 L367.5 61 L376.0 66.0 Z" fill="#00ffff"/>
<path d="M376.0 93.0 L367.5 98 L376.0 103.0 Z" fill="#00ffff"/>
<path d="M376.0 103.0 L367.5 108 L376.0 113.0 Z" fill="#f00"/>
<text x="20.50" y="55.00" font-size="11.66" font-weight="bold" fill="#f00" stroke="#f00" stroke-width="0.3" text-anchor="start" textLength="250.26" lengthAdjust="spacingAndGlyphs" >Stop! In The Name of Love - Suprmemes</text>
<rect x="83" y="124" width="622" height="1" fill="#008000" />
<rect x="83" y="124" width="1" height="70" fill="#008000" />
<rect x="79.5" y="120" width="9" height="8" fill="#008000" />
<rect x="79.5" y="191" width="9" height="6" fill="#008000" />
<text x="20.00" y="134.00" font-size="11.66" font-weight="bold" fill="#f00" stroke="#f00" stroke-width="0.3" text-anchor="start" textLength="70.03" lengthAdjust="spacingAndGlyphs" >Voice Track</text>
<path d="M75 125.0 L81 130.5 L75 136.0 Z" fill="#f00"/>
<path d="M75 181.5 L83 187 L75 192.5 Z" fill="#f00"/>
<text x="565.30" y="195.00" font-size="11.66" font-weight="bold" fill="#f00" stroke="#f00" stroke-width="0.3" text-anchor="start" textLength="89.84" lengthAdjust="spacingAndGlyphs" >Start 13:21:51</text>
<rect x="193" y="203" width="512" height="1" fill="#008000" />
<rect x="193" y="203" width="1" height="70" fill="#008000" />
<rect x="189.5" y="199" width="9" height="8" fill="#008000" />
<rect x="189.5" y="270" width="9" height="6" fill="#008000" />
<text x="20.00" y="213.00" font-size="11.66" font-weight="bold" fill="#f00" stroke="#f00" stroke-width="0.3" text-anchor="start" textLength="265.91" lengthAdjust="spacingAndGlyphs" >One Toke Over The Line - Brewer &amp; Shipley</text>
<path d="M185.0 204.25 L190.3 209.5 L185.0 214.75 Z" fill="#f00"/>
<path d="M185.2 260.75 L193.2 266 L185.2 271.25 Z" fill="#f00"/>
<text x="565.50" y="274.00" font-size="11.66" font-weight="bold" fill="#f00" stroke="#f00" stroke-width="0.3" text-anchor="start" textLength="40.48" lengthAdjust="spacingAndGlyphs" >Talk :0</text>
<rect x="12" y="38" width="696" height="1" fill="#fff" opacity="0.8"/>
<rect x="12" y="41" width="696" height="1" fill="#fff" opacity="0.8"/>
<rect x="12" y="117" width="696" height="1" fill="#fff" opacity="0.8"/>
<rect x="12" y="120" width="696" height="1" fill="#fff" opacity="0.8"/>
<rect x="12" y="196" width="696" height="1" fill="#fff" opacity="0.8"/>
<rect x="12" y="199" width="696" height="1" fill="#fff" opacity="0.8"/>
<rect x="12" y="275" width="696" height="1" fill="#fff" opacity="0.8"/>
<rect x="12" y="278" width="696" height="1" fill="#fff" opacity="0.8"/>
<rect x="13" y="39" width="694" height="2" fill="#000" />
<rect x="13" y="118" width="694" height="2" fill="#000" />
<rect x="13" y="197" width="694" height="2" fill="#000" />
<rect x="13" y="276" width="694" height="2" fill="#000" />
<rect x="12" y="38" width="1" height="240" fill="#fff" opacity="0.8"/>
<rect x="13" y="39" width="2" height="239" fill="#000" />
<rect x="705" y="39" width="2" height="239" fill="#000" />
<rect x="14" y="278" width="691" height="84" fill="#c8c8c8" />
<rect x="13" y="278" width="1" height="85" fill="#000" />
<rect x="14" y="278" width="1" height="83" fill="#e0e0e0" />
<rect x="14" y="361" width="691" height="1" fill="#dcdcdc" />
<rect x="705" y="278" width="1" height="85" fill="#000" />
<rect x="13" y="362" width="693" height="1" fill="#000" />
<rect x="22.5" y="293.5" width="79" height="49" rx="3" ry="3" fill="url(#btn)" stroke="#7c7c7c" stroke-width="1"/>
<rect x="23.5" y="294.5" width="77" height="1" fill="#f4f4f6" opacity="0.7"/>
<path d="M48 304 L76.5 318.3 L48 332.5 Z" fill="#000"/>
<rect x="112.5" y="293.5" width="79" height="49" rx="3" ry="3" fill="url(#btn)" stroke="#7c7c7c" stroke-width="1"/>
<rect x="113.5" y="294.5" width="77" height="1" fill="#f4f4f6" opacity="0.7"/>
<rect x="137" y="303.5" width="29.5" height="29.5" fill="#ff0000" />
<path d="M137 333 V303.5 H166.5" fill="none" stroke="#333" stroke-width="1" opacity="0.8"/>
<path d="M137.5 333 H166.5 V303.5" fill="none" stroke="#fff" stroke-width="1" opacity="0.6"/>
<rect x="207" y="288" width="335" height="60" fill="#000" />
<text x="217.00" y="308.00" font-size="11.66" font-weight="bold" fill="#fff" stroke="#fff" stroke-width="0.3" text-anchor="start" textLength="7.01" lengthAdjust="spacingAndGlyphs" >L</text>
<text x="217.00" y="338.00" font-size="11.66" font-weight="bold" fill="#fff" stroke="#fff" stroke-width="0.3" text-anchor="start" textLength="8.47" lengthAdjust="spacingAndGlyphs" >R</text>
<rect x="232" y="298" width="5" height="10" fill="#0b560b" />
<rect x="232" y="328" width="5" height="10" fill="#0b560b" />
<rect x="238" y="298" width="5" height="10" fill="#0b560b" />
<rect x="238" y="328" width="5" height="10" fill="#0b560b" />
<rect x="244" y="298" width="5" height="10" fill="#0b560b" />
<rect x="244" y="328" width="5" height="10" fill="#0b560b" />
<rect x="250" y="298" width="5" height="10" fill="#0b560b" />
<rect x="250" y="328" width="5" height="10" fill="#0b560b" />
<rect x="256" y="298" width="5" height="10" fill="#0b560b" />
<rect x="256" y="328" width="5" height="10" fill="#0b560b" />
<rect x="262" y="298" width="5" height="10" fill="#0b560b" />
<rect x="262" y="328" width="5" height="10" fill="#0b560b" />
<rect x="268" y="298" width="5" height="10" fill="#0b560b" />
<rect x="268" y="328" width="5" height="10" fill="#0b560b" />
<rect x="274" y="298" width="5" height="10" fill="#0b560b" />
<rect x="274" y="328" width="5" height="10" fill="#0b560b" />
<rect x="280" y="298" width="5" height="10" fill="#0b560b" />
<rect x="280" y="328" width="5" height="10" fill="#0b560b" />
<rect x="286" y="298" width="5" height="10" fill="#0b560b" />
<rect x="286" y="328" width="5" height="10" fill="#0b560b" />
<rect x="292" y="298" width="5" height="10" fill="#0b560b" />
<rect x="292" y="328" width="5" height="10" fill="#0b560b" />
<rect x="298" y="298" width="5" height="10" fill="#0b560b" />
<rect x="298" y="328" width="5" height="10" fill="#0b560b" />
<rect x="304" y="298" width="5" height="10" fill="#0b560b" />
<rect x="304" y="328" width="5" height="10" fill="#0b560b" />
<rect x="310" y="298" width="5" height="10" fill="#0b560b" />
<rect x="310" y="328" width="5" height="10" fill="#0b560b" />
<rect x="316" y="298" width="5" height="10" fill="#0b560b" />
<rect x="316" y="328" width="5" height="10" fill="#0b560b" />
<rect x="322" y="298" width="5" height="10" fill="#0b560b" />
<rect x="322" y="328" width="5" height="10" fill="#0b560b" />
<rect x="328" y="298" width="5" height="10" fill="#0b560b" />
<rect x="328" y="328" width="5" height="10" fill="#0b560b" />
<rect x="334" y="298" width="5" height="10" fill="#0b560b" />
<rect x="334" y="328" width="5" height="10" fill="#0b560b" />
<rect x="340" y="298" width="5" height="10" fill="#0b560b" />
<rect x="340" y="328" width="5" height="10" fill="#0b560b" />
<rect x="346" y="298" width="5" height="10" fill="#0b560b" />
<rect x="346" y="328" width="5" height="10" fill="#0b560b" />
<rect x="352" y="298" width="5" height="10" fill="#0b560b" />
<rect x="352" y="328" width="5" height="10" fill="#0b560b" />
<rect x="358" y="298" width="5" height="10" fill="#0b560b" />
<rect x="358" y="328" width="5" height="10" fill="#0b560b" />
<rect x="364" y="298" width="5" height="10" fill="#0b560b" />
<rect x="364" y="328" width="5" height="10" fill="#0b560b" />
<rect x="370" y="298" width="5" height="10" fill="#0b560b" />
<rect x="370" y="328" width="5" height="10" fill="#0b560b" />
<rect x="376" y="298" width="5" height="10" fill="#0b560b" />
<rect x="376" y="328" width="5" height="10" fill="#0b560b" />
<rect x="382" y="298" width="5" height="10" fill="#0b560b" />
<rect x="382" y="328" width="5" height="10" fill="#0b560b" />
<rect x="388" y="298" width="5" height="10" fill="#0b560b" />
<rect x="388" y="328" width="5" height="10" fill="#0b560b" />
<rect x="394" y="298" width="5" height="10" fill="#0b560b" />
<rect x="394" y="328" width="5" height="10" fill="#0b560b" />
<rect x="400" y="298" width="5" height="10" fill="#0b560b" />
<rect x="400" y="328" width="5" height="10" fill="#0b560b" />
<rect x="406" y="298" width="5" height="10" fill="#0b560b" />
<rect x="406" y="328" width="5" height="10" fill="#0b560b" />
<rect x="412" y="298" width="5" height="10" fill="#0b560b" />
<rect x="412" y="328" width="5" height="10" fill="#0b560b" />
<rect x="418" y="298" width="5" height="10" fill="#0b560b" />
<rect x="418" y="328" width="5" height="10" fill="#0b560b" />
<rect x="424" y="298" width="5" height="10" fill="#0b560b" />
<rect x="424" y="328" width="5" height="10" fill="#0b560b" />
<rect x="430" y="298" width="5" height="10" fill="#0b560b" />
<rect x="430" y="328" width="5" height="10" fill="#0b560b" />
<rect x="436" y="298" width="5" height="10" fill="#0b560b" />
<rect x="436" y="328" width="5" height="10" fill="#0b560b" />
<rect x="442" y="298" width="5" height="10" fill="#0b560b" />
<rect x="442" y="328" width="5" height="10" fill="#0b560b" />
<rect x="448" y="298" width="5" height="10" fill="#0b560b" />
<rect x="448" y="328" width="5" height="10" fill="#0b560b" />
<rect x="454" y="298" width="5" height="10" fill="#0b560b" />
<rect x="454" y="328" width="5" height="10" fill="#0b560b" />
<rect x="460" y="298" width="5" height="10" fill="#0b560b" />
<rect x="460" y="328" width="5" height="10" fill="#0b560b" />
<rect x="466" y="298" width="5" height="10" fill="#575709" />
<rect x="466" y="328" width="5" height="10" fill="#575709" />
<rect x="472" y="298" width="5" height="10" fill="#575709" />
<rect x="472" y="328" width="5" height="10" fill="#575709" />
<rect x="478" y="298" width="5" height="10" fill="#575709" />
<rect x="478" y="328" width="5" height="10" fill="#575709" />
<rect x="484" y="298" width="5" height="10" fill="#575709" />
<rect x="484" y="328" width="5" height="10" fill="#575709" />
<rect x="490" y="298" width="5" height="10" fill="#575709" />
<rect x="490" y="328" width="5" height="10" fill="#575709" />
<rect x="496" y="298" width="5" height="10" fill="#575709" />
<rect x="496" y="328" width="5" height="10" fill="#575709" />
<rect x="502" y="298" width="5" height="10" fill="#575709" />
<rect x="502" y="328" width="5" height="10" fill="#575709" />
<rect x="508" y="298" width="5" height="10" fill="#600000" />
<rect x="508" y="328" width="5" height="10" fill="#600000" />
<rect x="514" y="298" width="5" height="10" fill="#600000" />
<rect x="514" y="328" width="5" height="10" fill="#600000" />
<rect x="520" y="298" width="5" height="10" fill="#600000" />
<rect x="520" y="328" width="5" height="10" fill="#600000" />
<rect x="526" y="298" width="5" height="10" fill="#600000" />
<rect x="526" y="328" width="5" height="10" fill="#600000" />
<text x="255.60" y="323.00" font-size="12.72" font-weight="bold" fill="#fff" stroke="#fff" stroke-width="0.3" text-anchor="middle" textLength="21.68" lengthAdjust="spacingAndGlyphs" >-35</text>
<text x="294.70" y="323.00" font-size="12.72" font-weight="bold" fill="#fff" stroke="#fff" stroke-width="0.3" text-anchor="middle" textLength="21.68" lengthAdjust="spacingAndGlyphs" >-30</text>
<text x="333.90" y="323.00" font-size="12.72" font-weight="bold" fill="#fff" stroke="#fff" stroke-width="0.3" text-anchor="middle" textLength="21.68" lengthAdjust="spacingAndGlyphs" >-25</text>
<text x="370.60" y="323.00" font-size="12.72" font-weight="bold" fill="#fff" stroke="#fff" stroke-width="0.3" text-anchor="middle" textLength="21.68" lengthAdjust="spacingAndGlyphs" >-20</text>
<text x="408.50" y="323.00" font-size="12.72" font-weight="bold" fill="#fff" stroke="#fff" stroke-width="0.3" text-anchor="middle" textLength="21.68" lengthAdjust="spacingAndGlyphs" >-15</text>
<text x="446.50" y="323.00" font-size="12.72" font-weight="bold" fill="#fff" stroke="#fff" stroke-width="0.3" text-anchor="middle" textLength="21.68" lengthAdjust="spacingAndGlyphs" >-10</text>
<text x="480.50" y="323.00" font-size="12.72" font-weight="bold" fill="#fff" stroke="#fff" stroke-width="0.3" text-anchor="middle" textLength="13.33" lengthAdjust="spacingAndGlyphs" >-5</text>
<text x="528.00" y="323.00" font-size="12.72" font-weight="bold" fill="#fff" stroke="#fff" stroke-width="0.3" text-anchor="middle" textLength="8.35" lengthAdjust="spacingAndGlyphs" >0</text>
<rect x="567" y="283" width="110" height="25" fill="#efefef" />
<text x="573.50" y="303.00" font-size="20.34" font-weight="normal" fill="#000" text-anchor="start" textLength="96.18" lengthAdjust="spacingAndGlyphs" >0:00:20.8</text>
<text x="614.50" y="327.00" font-size="11.66" font-weight="normal" fill="#1e1e1e" text-anchor="middle" textLength="58.41" lengthAdjust="spacingAndGlyphs" >Remaining</text>
<text x="577.00" y="339.00" font-size="11.66" font-weight="normal" fill="#1e1e1e" text-anchor="middle" textLength="34.52" lengthAdjust="spacingAndGlyphs" >Tracks</text>
<text x="637.00" y="339.00" font-size="11.66" font-weight="normal" fill="#1e1e1e" text-anchor="middle" textLength="26.92" lengthAdjust="spacingAndGlyphs" >Time</text>
<rect x="557" y="341" width="40" height="18" fill="#efefef" />
<text x="577.00" y="353.50" font-size="11.66" font-weight="bold" fill="#000" stroke="#000" stroke-width="0.3" text-anchor="middle" textLength="15.31" lengthAdjust="spacingAndGlyphs" >18</text>
<rect x="602" y="341" width="80" height="18" fill="#efefef" />
<text x="642.00" y="353.50" font-size="11.66" font-weight="bold" fill="#f00" stroke="#f00" stroke-width="0.3" text-anchor="middle" textLength="63.46" lengthAdjust="spacingAndGlyphs" >-0:06:03.6</text>
<rect x="713.5" y="43.5" width="69" height="69" rx="2.5" fill="url(#gbtn)" stroke="#8a7f88" stroke-width="1"/>
<text x="748.80" y="83.80" font-size="12.72" font-weight="bold" fill="#ffffff" stroke="#ffffff" stroke-width="0.3" text-anchor="middle" textLength="34.13" lengthAdjust="spacingAndGlyphs" opacity="0.35">Start</text>
<text x="748.00" y="83.00" font-size="12.72" font-weight="bold" fill="#8c8c8c" stroke="#8c8c8c" stroke-width="0.3" text-anchor="middle" textLength="34.13" lengthAdjust="spacingAndGlyphs" >Start</text>
<rect x="713.5" y="123.5" width="69" height="69" rx="2.5" fill="url(#rbtn)" stroke="#8a7f88" stroke-width="1"/>
<text x="748.80" y="163.80" font-size="12.72" font-weight="bold" fill="#ffffff" stroke="#ffffff" stroke-width="0.3" text-anchor="middle" textLength="47.24" lengthAdjust="spacingAndGlyphs" opacity="0.35">Record</text>
<text x="748.00" y="163.00" font-size="12.72" font-weight="bold" fill="#8c8c8c" stroke="#8c8c8c" stroke-width="0.3" text-anchor="middle" textLength="47.24" lengthAdjust="spacingAndGlyphs" >Record</text>
<rect x="713.5" y="203.5" width="69" height="69" rx="2.5" fill="url(#gbtn)" stroke="#8a7f88" stroke-width="1"/>
<text x="748.80" y="243.80" font-size="12.72" font-weight="bold" fill="#ffffff" stroke="#ffffff" stroke-width="0.3" text-anchor="middle" textLength="34.13" lengthAdjust="spacingAndGlyphs" opacity="0.35">Start</text>
<text x="748.00" y="243.00" font-size="12.72" font-weight="bold" fill="#8c8c8c" stroke="#8c8c8c" stroke-width="0.3" text-anchor="middle" textLength="34.13" lengthAdjust="spacingAndGlyphs" >Start</text>
<rect x="713.5" y="283.5" width="69" height="69" rx="2.5" fill="url(#bbtn)" stroke="#8a7f88" stroke-width="1"/>
<text x="748.80" y="323.80" font-size="12.72" font-weight="bold" fill="#ffffff" stroke="#ffffff" stroke-width="0.3" text-anchor="middle" textLength="32.70" lengthAdjust="spacingAndGlyphs" opacity="0.35">Save</text>
<text x="748.00" y="323.00" font-size="12.72" font-weight="bold" fill="#8c8c8c" stroke="#8c8c8c" stroke-width="0.3" text-anchor="middle" textLength="32.70" lengthAdjust="spacingAndGlyphs" >Save</text>
<rect x="713.5" y="388.5" width="69" height="69" rx="3" ry="3" fill="url(#btn)" stroke="#7c7c7c" stroke-width="1"/>
<rect x="714.5" y="389.5" width="67" height="1" fill="#f4f4f6" opacity="0.7"/>
<text x="748.00" y="428.00" font-size="12.72" font-weight="bold" fill="#000" stroke="#000" stroke-width="0.3" text-anchor="middle" textLength="53.99" lengthAdjust="spacingAndGlyphs" >Hit Post</text>
<rect x="713.5" y="560.5" width="69" height="69" rx="3" ry="3" fill="url(#btn)" stroke="#7c7c7c" stroke-width="1"/>
<rect x="714.5" y="561.5" width="67" height="1" fill="#f4f4f6" opacity="0.7"/>
<text x="748.00" y="599.50" font-size="12.72" font-weight="bold" fill="#000" stroke="#000" stroke-width="0.3" text-anchor="middle" textLength="54.46" lengthAdjust="spacingAndGlyphs" >Do Over</text>
<rect x="13" y="363" width="692" height="295" rx="2" fill="#a8a8a8"/>
<rect x="14" y="364" width="690" height="293" fill="#8e8e8e"/>
<clipPath id="lc"><rect x="15" y="365" width="672" height="276"/></clipPath>
<g clip-path="url(#lc)">
<rect x="15" y="365" width="672" height="276" fill="#fff" />
<rect x="15.5" y="365.5" width="113" height="21" rx="1" fill="url(#btn)" stroke="#8a8a8a" stroke-width="1"/>
<text x="71.50" y="379.70" font-size="11.66" font-weight="bold" fill="#000" stroke="#000" stroke-width="0.3" text-anchor="middle" textLength="65.31" lengthAdjust="spacingAndGlyphs" >Start Time</text>
<rect x="129.5" y="365.5" width="50" height="21" rx="1" fill="url(#btn)" stroke="#8a8a8a" stroke-width="1"/>
<text x="154.00" y="379.70" font-size="11.66" font-weight="bold" fill="#000" stroke="#000" stroke-width="0.3" text-anchor="middle" textLength="33.52" lengthAdjust="spacingAndGlyphs" >Trans</text>
<rect x="180.5" y="365.5" width="55" height="21" rx="1" fill="url(#btn)" stroke="#8a8a8a" stroke-width="1"/>
<text x="207.50" y="379.70" font-size="11.66" font-weight="bold" fill="#000" stroke="#000" stroke-width="0.3" text-anchor="middle" textLength="26.18" lengthAdjust="spacingAndGlyphs" >Cart</text>
<rect x="236.5" y="365.5" width="80" height="21" rx="1" fill="url(#btn)" stroke="#8a8a8a" stroke-width="1"/>
<text x="276.00" y="379.70" font-size="11.66" font-weight="bold" fill="#000" stroke="#000" stroke-width="0.3" text-anchor="middle" textLength="37.72" lengthAdjust="spacingAndGlyphs" >Group</text>
<rect x="317.5" y="365.5" width="56" height="21" rx="1" fill="url(#btn)" stroke="#8a8a8a" stroke-width="1"/>
<text x="345.00" y="379.70" font-size="11.66" font-weight="bold" fill="#000" stroke="#000" stroke-width="0.3" text-anchor="middle" textLength="43.26" lengthAdjust="spacingAndGlyphs" >Length</text>
<rect x="374.5" y="365.5" width="247" height="21" rx="1" fill="url(#btn)" stroke="#8a8a8a" stroke-width="1"/>
<text x="497.50" y="379.70" font-size="11.66" font-weight="bold" fill="#000" stroke="#000" stroke-width="0.3" text-anchor="middle" textLength="27.76" lengthAdjust="spacingAndGlyphs" >Title</text>
<rect x="622.5" y="365.5" width="64" height="21" rx="1" fill="url(#btn)" stroke="#8a8a8a" stroke-width="1"/>
<g transform="translate(18,394)">
<rect x="0.5" y="0.5" width="15" height="15" fill="#d6c674" stroke="#000" stroke-width="1.1"/>
<rect x="1.3" y="1.3" width="13.4" height="1" fill="#f2ecc0"/>
<rect x="1.3" y="1.3" width="1" height="11" fill="#f2ecc0"/>
<rect x="1.3" y="11.8" width="13.4" height="1" fill="#f4eec8"/>
<rect x="1.3" y="12.8" width="13.4" height="2" fill="#bcae5c"/>
<path d="M8 6.5 L14 1 L15.2 2.4 L9.4 8 L7.2 8.8 Z" fill="#f8c828" stroke="#000" stroke-width="0.9"/>
</g>
<text x="125.80" y="406.00" font-size="11.66" font-weight="normal" fill="#0000ff" text-anchor="end" textLength="66.62" lengthAdjust="spacingAndGlyphs" >T13:15:00.0</text>
<text x="154.50" y="406.00" font-size="11.66" font-weight="normal" fill="#000" text-anchor="middle" textLength="37.46" lengthAdjust="spacingAndGlyphs" >SEGUE</text>
<text x="208.00" y="406.00" font-size="11.66" font-weight="normal" fill="#000" text-anchor="middle" textLength="46.47" lengthAdjust="spacingAndGlyphs" >MARKER</text>
<text x="377.00" y="406.00" font-size="11.66" font-weight="normal" fill="#000" text-anchor="start" textLength="135.14" lengthAdjust="spacingAndGlyphs" >Station Break Goes Here</text>
<g transform="translate(18,424)">
<path d="M7.5 0.8 L9.8 2 V13.6 L7.5 14.8 Z" fill="#f4f4f4"/>
<path d="M0.5 5.3 H2.6 L7.5 0.8 V14.8 L2.6 10.3 H0.5 Z" fill="#f8f23c"/>
<path d="M7.5 0.8 L2.6 5.3 H0.5 V10.3 H2.6 L7.5 14.8" fill="none" stroke="#000" stroke-width="1" opacity="0.85"/>
<path d="M6.8 0.4 L8.6 1.2 M6.8 15.2 L8.6 14.4" stroke="#000" stroke-width="1.6"/>
<rect x="6.7" y="2" width="1" height="11.5" fill="#000"/>
<ellipse cx="8.3" cy="8" rx="1.1" ry="1.7" fill="#000"/>
<ellipse cx="8.2" cy="8" rx="0.4" ry="0.8" fill="#f4f4f4"/>
<rect x="2.9" y="5.6" width="1" height="4.4" fill="#fff" opacity="0.6"/>
<rect x="10.1" y="3.3" width="0.9" height="10.3" fill="#8c8c8c"/>
<path d="M12.2 5.6 L14.8 3.3 M12.2 8.5 H15.8 M12.2 11 L14.8 13.5" stroke="#7a7a7a" stroke-width="0.9"/>
</g>
<text x="125.80" y="436.00" font-size="11.66" font-weight="normal" fill="#000" text-anchor="end" textLength="59.90" lengthAdjust="spacingAndGlyphs" >13:15:00.0</text>
<text x="154.50" y="436.00" font-size="11.66" font-weight="normal" fill="#000" text-anchor="middle" textLength="37.46" lengthAdjust="spacingAndGlyphs" >SEGUE</text>
<text x="208.00" y="436.00" font-size="11.66" font-weight="normal" fill="#000" text-anchor="middle" textLength="41.99" lengthAdjust="spacingAndGlyphs" >060101</text>
<text x="276.50" y="436.00" font-size="11.66" font-weight="bold" fill="#50f000" stroke="#50f000" stroke-width="0.3" text-anchor="middle" textLength="45.37" lengthAdjust="spacingAndGlyphs" >IDENTS</text>
<text x="371.00" y="436.00" font-size="11.66" font-weight="normal" fill="#000" text-anchor="end" textLength="17.70" lengthAdjust="spacingAndGlyphs" >:05</text>
<text x="377.00" y="436.00" font-size="11.66" font-weight="normal" fill="#000" text-anchor="start" textLength="81.58" lengthAdjust="spacingAndGlyphs" >Station Imager</text>
<g transform="translate(18,454)">
<path d="M7.5 0.8 L9.8 2 V13.6 L7.5 14.8 Z" fill="#f4f4f4"/>
<path d="M0.5 5.3 H2.6 L7.5 0.8 V14.8 L2.6 10.3 H0.5 Z" fill="#f8f23c"/>
<path d="M7.5 0.8 L2.6 5.3 H0.5 V10.3 H2.6 L7.5 14.8" fill="none" stroke="#000" stroke-width="1" opacity="0.85"/>
<path d="M6.8 0.4 L8.6 1.2 M6.8 15.2 L8.6 14.4" stroke="#000" stroke-width="1.6"/>
<rect x="6.7" y="2" width="1" height="11.5" fill="#000"/>
<ellipse cx="8.3" cy="8" rx="1.1" ry="1.7" fill="#000"/>
<ellipse cx="8.2" cy="8" rx="0.4" ry="0.8" fill="#f4f4f4"/>
<rect x="2.9" y="5.6" width="1" height="4.4" fill="#fff" opacity="0.6"/>
<rect x="10.1" y="3.3" width="0.9" height="10.3" fill="#8c8c8c"/>
<path d="M12.2 5.6 L14.8 3.3 M12.2 8.5 H15.8 M12.2 11 L14.8 13.5" stroke="#7a7a7a" stroke-width="0.9"/>
</g>
<text x="125.80" y="466.00" font-size="11.66" font-weight="normal" fill="#000" text-anchor="end" textLength="59.90" lengthAdjust="spacingAndGlyphs" >13:15:03.0</text>
<text x="154.50" y="466.00" font-size="11.66" font-weight="normal" fill="#000" text-anchor="middle" textLength="37.46" lengthAdjust="spacingAndGlyphs" >SEGUE</text>
<text x="208.00" y="466.00" font-size="11.66" font-weight="normal" fill="#000" text-anchor="middle" textLength="41.99" lengthAdjust="spacingAndGlyphs" >010559</text>
<text x="276.50" y="466.00" font-size="11.66" font-weight="bold" fill="#00a8ff" stroke="#00a8ff" stroke-width="0.3" text-anchor="middle" textLength="39.97" lengthAdjust="spacingAndGlyphs" >MUSIC</text>
<text x="371.00" y="466.00" font-size="11.66" font-weight="normal" fill="#000" text-anchor="end" textLength="24.70" lengthAdjust="spacingAndGlyphs" >4:06</text>
<text x="377.00" y="466.00" font-size="11.66" font-weight="normal" fill="#000" text-anchor="start" textLength="109.40" lengthAdjust="spacingAndGlyphs" >Love Is A Battlefield</text>
<text x="625.00" y="466.00" font-size="11.66" font-weight="normal" fill="#000" text-anchor="start" textLength="64.29" lengthAdjust="spacingAndGlyphs" >Pat Benatar</text>
<g transform="translate(18,484)">
<path d="M7.5 0.8 L9.8 2 V13.6 L7.5 14.8 Z" fill="#f4f4f4"/>
<path d="M0.5 5.3 H2.6 L7.5 0.8 V14.8 L2.6 10.3 H0.5 Z" fill="#f8f23c"/>
<path d="M7.5 0.8 L2.6 5.3 H0.5 V10.3 H2.6 L7.5 14.8" fill="none" stroke="#000" stroke-width="1" opacity="0.85"/>
<path d="M6.8 0.4 L8.6 1.2 M6.8 15.2 L8.6 14.4" stroke="#000" stroke-width="1.6"/>
<rect x="6.7" y="2" width="1" height="11.5" fill="#000"/>
<ellipse cx="8.3" cy="8" rx="1.1" ry="1.7" fill="#000"/>
<ellipse cx="8.2" cy="8" rx="0.4" ry="0.8" fill="#f4f4f4"/>
<rect x="2.9" y="5.6" width="1" height="4.4" fill="#fff" opacity="0.6"/>
<rect x="10.1" y="3.3" width="0.9" height="10.3" fill="#8c8c8c"/>
<path d="M12.2 5.6 L14.8 3.3 M12.2 8.5 H15.8 M12.2 11 L14.8 13.5" stroke="#7a7a7a" stroke-width="0.9"/>
</g>
<text x="125.80" y="496.00" font-size="11.66" font-weight="normal" fill="#000" text-anchor="end" textLength="59.90" lengthAdjust="spacingAndGlyphs" >13:16:03.0</text>
<text x="154.50" y="496.00" font-size="11.66" font-weight="normal" fill="#000" text-anchor="middle" textLength="37.46" lengthAdjust="spacingAndGlyphs" >SEGUE</text>
<text x="208.00" y="496.00" font-size="11.66" font-weight="normal" fill="#000" text-anchor="middle" textLength="41.99" lengthAdjust="spacingAndGlyphs" >010708</text>
<text x="276.50" y="496.00" font-size="11.66" font-weight="bold" fill="#00a8ff" stroke="#00a8ff" stroke-width="0.3" text-anchor="middle" textLength="39.97" lengthAdjust="spacingAndGlyphs" >MUSIC</text>
<text x="371.00" y="496.00" font-size="11.66" font-weight="normal" fill="#000" text-anchor="end" textLength="24.70" lengthAdjust="spacingAndGlyphs" >2:49</text>
<text x="377.00" y="496.00" font-size="11.66" font-weight="normal" fill="#000" text-anchor="start" textLength="146.57" lengthAdjust="spacingAndGlyphs" >Stop! In The Name of Love</text>
<text x="625.00" y="496.00" font-size="11.66" font-weight="normal" fill="#000" text-anchor="start" textLength="65.96" lengthAdjust="spacingAndGlyphs" >Suprmemes</text>
<rect x="15" y="507" width="672" height="30" fill="#6389b0" />
<g transform="translate(18,514)">
<path d="M7.5 0.8 L9.8 2 V13.6 L7.5 14.8 Z" fill="#e2e6ee"/>
<path d="M0.5 5.3 H2.6 L7.5 0.8 V14.8 L2.6 10.3 H0.5 Z" fill="#d8604e"/>
<path d="M7.5 0.8 L2.6 5.3 H0.5 V10.3 H2.6 L7.5 14.8" fill="none" stroke="#000" stroke-width="1" opacity="0.85"/>
<path d="M6.8 0.4 L8.6 1.2 M6.8 15.2 L8.6 14.4" stroke="#000" stroke-width="1.6"/>
<rect x="6.7" y="2" width="1" height="11.5" fill="#000"/>
<ellipse cx="8.3" cy="8" rx="1.1" ry="1.7" fill="#000"/>
<ellipse cx="8.2" cy="8" rx="0.4" ry="0.8" fill="#e2e6ee"/>
<rect x="2.9" y="5.6" width="1" height="4.4" fill="#fff" opacity="0.6"/>
<rect x="10.1" y="3.3" width="0.9" height="10.3" fill="#8c8c8c"/>
<path d="M12.2 5.6 L14.8 3.3 M12.2 8.5 H15.8 M12.2 11 L14.8 13.5" stroke="#7a7a7a" stroke-width="0.9"/>
</g>
<text x="125.80" y="526.00" font-size="11.66" font-weight="normal" fill="#f4f4f4" text-anchor="end" textLength="59.90" lengthAdjust="spacingAndGlyphs" >00:00:00.0</text>
<text x="154.50" y="526.00" font-size="11.66" font-weight="normal" fill="#f4f4f4" text-anchor="middle" textLength="37.46" lengthAdjust="spacingAndGlyphs" >SEGUE</text>
<text x="208.00" y="526.00" font-size="11.66" font-weight="normal" fill="#f4f4f4" text-anchor="middle" textLength="41.99" lengthAdjust="spacingAndGlyphs" >850004</text>
<text x="276.50" y="526.00" font-size="11.66" font-weight="bold" fill="#f4f4f4" stroke="#f4f4f4" stroke-width="0.3" text-anchor="middle" textLength="49.01" lengthAdjust="spacingAndGlyphs" >TRACKS</text>
<text x="371.00" y="526.00" font-size="11.66" font-weight="normal" fill="#f4f4f4" text-anchor="end" textLength="17.70" lengthAdjust="spacingAndGlyphs" >:20</text>
<text x="377.00" y="526.00" font-size="11.66" font-weight="normal" fill="#f4f4f4" text-anchor="start" textLength="61.55" lengthAdjust="spacingAndGlyphs" >Voice Track</text>
<g transform="translate(18,544)">
<path d="M7.5 0.8 L9.8 2 V13.6 L7.5 14.8 Z" fill="#f4f4f4"/>
<path d="M0.5 5.3 H2.6 L7.5 0.8 V14.8 L2.6 10.3 H0.5 Z" fill="#f8f23c"/>
<path d="M7.5 0.8 L2.6 5.3 H0.5 V10.3 H2.6 L7.5 14.8" fill="none" stroke="#000" stroke-width="1" opacity="0.85"/>
<path d="M6.8 0.4 L8.6 1.2 M6.8 15.2 L8.6 14.4" stroke="#000" stroke-width="1.6"/>
<rect x="6.7" y="2" width="1" height="11.5" fill="#000"/>
<ellipse cx="8.3" cy="8" rx="1.1" ry="1.7" fill="#000"/>
<ellipse cx="8.2" cy="8" rx="0.4" ry="0.8" fill="#f4f4f4"/>
<rect x="2.9" y="5.6" width="1" height="4.4" fill="#fff" opacity="0.6"/>
<rect x="10.1" y="3.3" width="0.9" height="10.3" fill="#8c8c8c"/>
<path d="M12.2 5.6 L14.8 3.3 M12.2 8.5 H15.8 M12.2 11 L14.8 13.5" stroke="#7a7a7a" stroke-width="0.9"/>
</g>
<text x="125.80" y="556.00" font-size="11.66" font-weight="normal" fill="#000" text-anchor="end" textLength="59.90" lengthAdjust="spacingAndGlyphs" >13:17:04.0</text>
<text x="154.50" y="556.00" font-size="11.66" font-weight="normal" fill="#000" text-anchor="middle" textLength="37.46" lengthAdjust="spacingAndGlyphs" >SEGUE</text>
<text x="208.00" y="556.00" font-size="11.66" font-weight="normal" fill="#000" text-anchor="middle" textLength="41.99" lengthAdjust="spacingAndGlyphs" >010175</text>
<text x="276.50" y="556.00" font-size="11.66" font-weight="bold" fill="#00a8ff" stroke="#00a8ff" stroke-width="0.3" text-anchor="middle" textLength="39.97" lengthAdjust="spacingAndGlyphs" >MUSIC</text>
<text x="371.00" y="556.00" font-size="11.66" font-weight="normal" fill="#000" text-anchor="end" textLength="24.70" lengthAdjust="spacingAndGlyphs" >3:17</text>
<text x="377.00" y="556.00" font-size="11.66" font-weight="normal" fill="#000" text-anchor="start" textLength="130.55" lengthAdjust="spacingAndGlyphs" >One Toke Over The Line</text>
<text x="625.00" y="556.00" font-size="11.66" font-weight="normal" fill="#000" text-anchor="start" textLength="94.78" lengthAdjust="spacingAndGlyphs" >Brewer &amp; Shipley</text>
<g transform="translate(18,574)">
<path d="M7.5 0.8 L9.8 2 V13.6 L7.5 14.8 Z" fill="#f4f4f4"/>
<path d="M0.5 5.3 H2.6 L7.5 0.8 V14.8 L2.6 10.3 H0.5 Z" fill="#f8f23c"/>
<path d="M7.5 0.8 L2.6 5.3 H0.5 V10.3 H2.6 L7.5 14.8" fill="none" stroke="#000" stroke-width="1" opacity="0.85"/>
<path d="M6.8 0.4 L8.6 1.2 M6.8 15.2 L8.6 14.4" stroke="#000" stroke-width="1.6"/>
<rect x="6.7" y="2" width="1" height="11.5" fill="#000"/>
<ellipse cx="8.3" cy="8" rx="1.1" ry="1.7" fill="#000"/>
<ellipse cx="8.2" cy="8" rx="0.4" ry="0.8" fill="#f4f4f4"/>
<rect x="2.9" y="5.6" width="1" height="4.4" fill="#fff" opacity="0.6"/>
<rect x="10.1" y="3.3" width="0.9" height="10.3" fill="#8c8c8c"/>
<path d="M12.2 5.6 L14.8 3.3 M12.2 8.5 H15.8 M12.2 11 L14.8 13.5" stroke="#7a7a7a" stroke-width="0.9"/>
</g>
<text x="125.80" y="586.00" font-size="11.66" font-weight="normal" fill="#000" text-anchor="end" textLength="59.90" lengthAdjust="spacingAndGlyphs" >13:18:03.0</text>
<text x="154.50" y="586.00" font-size="11.66" font-weight="normal" fill="#000" text-anchor="middle" textLength="37.46" lengthAdjust="spacingAndGlyphs" >SEGUE</text>
<text x="208.00" y="586.00" font-size="11.66" font-weight="normal" fill="#000" text-anchor="middle" textLength="41.99" lengthAdjust="spacingAndGlyphs" >010813</text>
<text x="276.50" y="586.00" font-size="11.66" font-weight="bold" fill="#00a8ff" stroke="#00a8ff" stroke-width="0.3" text-anchor="middle" textLength="39.97" lengthAdjust="spacingAndGlyphs" >MUSIC</text>
<text x="371.00" y="586.00" font-size="11.66" font-weight="normal" fill="#000" text-anchor="end" textLength="24.70" lengthAdjust="spacingAndGlyphs" >4:34</text>
<text x="377.00" y="586.00" font-size="11.66" font-weight="normal" fill="#000" text-anchor="start" textLength="58.14" lengthAdjust="spacingAndGlyphs" >Lucky Man</text>
<text x="625.00" y="586.00" font-size="11.66" font-weight="normal" fill="#000" text-anchor="start" textLength="134.51" lengthAdjust="spacingAndGlyphs" >Emerson, Lake &amp; Palmer</text>
<g transform="translate(18,604)">
<path d="M7.5 0.8 L9.8 2 V13.6 L7.5 14.8 Z" fill="#f4f4f4"/>
<path d="M0.5 5.3 H2.6 L7.5 0.8 V14.8 L2.6 10.3 H0.5 Z" fill="#f8f23c"/>
<path d="M7.5 0.8 L2.6 5.3 H0.5 V10.3 H2.6 L7.5 14.8" fill="none" stroke="#000" stroke-width="1" opacity="0.85"/>
<path d="M6.8 0.4 L8.6 1.2 M6.8 15.2 L8.6 14.4" stroke="#000" stroke-width="1.6"/>
<rect x="6.7" y="2" width="1" height="11.5" fill="#000"/>
<ellipse cx="8.3" cy="8" rx="1.1" ry="1.7" fill="#000"/>
<ellipse cx="8.2" cy="8" rx="0.4" ry="0.8" fill="#f4f4f4"/>
<rect x="2.9" y="5.6" width="1" height="4.4" fill="#fff" opacity="0.6"/>
<rect x="10.1" y="3.3" width="0.9" height="10.3" fill="#8c8c8c"/>
<path d="M12.2 5.6 L14.8 3.3 M12.2 8.5 H15.8 M12.2 11 L14.8 13.5" stroke="#7a7a7a" stroke-width="0.9"/>
</g>
<text x="125.80" y="616.00" font-size="11.66" font-weight="normal" fill="#000" text-anchor="end" textLength="59.90" lengthAdjust="spacingAndGlyphs" >13:19:04.0</text>
<text x="154.50" y="616.00" font-size="11.66" font-weight="normal" fill="#000" text-anchor="middle" textLength="37.46" lengthAdjust="spacingAndGlyphs" >SEGUE</text>
<text x="208.00" y="616.00" font-size="11.66" font-weight="normal" fill="#000" text-anchor="middle" textLength="41.99" lengthAdjust="spacingAndGlyphs" >010809</text>
<text x="276.50" y="616.00" font-size="11.66" font-weight="bold" fill="#00a8ff" stroke="#00a8ff" stroke-width="0.3" text-anchor="middle" textLength="39.97" lengthAdjust="spacingAndGlyphs" >MUSIC</text>
<text x="371.00" y="616.00" font-size="11.66" font-weight="normal" fill="#000" text-anchor="end" textLength="24.70" lengthAdjust="spacingAndGlyphs" >3:49</text>
<text x="377.00" y="616.00" font-size="11.66" font-weight="normal" fill="#000" text-anchor="start" textLength="78.12" lengthAdjust="spacingAndGlyphs" >I'm So Excited</text>
<text x="625.00" y="616.00" font-size="11.66" font-weight="normal" fill="#000" text-anchor="start" textLength="79.20" lengthAdjust="spacingAndGlyphs" >Pointer Sisters</text>
<g transform="translate(18,634)">
<path d="M7.5 0.8 L9.8 2 V13.6 L7.5 14.8 Z" fill="#f4f4f4"/>
<path d="M0.5 5.3 H2.6 L7.5 0.8 V14.8 L2.6 10.3 H0.5 Z" fill="#f8f23c"/>
<path d="M7.5 0.8 L2.6 5.3 H0.5 V10.3 H2.6 L7.5 14.8" fill="none" stroke="#000" stroke-width="1" opacity="0.85"/>
<path d="M6.8 0.4 L8.6 1.2 M6.8 15.2 L8.6 14.4" stroke="#000" stroke-width="1.6"/>
<rect x="6.7" y="2" width="1" height="11.5" fill="#000"/>
<ellipse cx="8.3" cy="8" rx="1.1" ry="1.7" fill="#000"/>
<ellipse cx="8.2" cy="8" rx="0.4" ry="0.8" fill="#f4f4f4"/>
<rect x="2.9" y="5.6" width="1" height="4.4" fill="#fff" opacity="0.6"/>
<rect x="10.1" y="3.3" width="0.9" height="10.3" fill="#8c8c8c"/>
<path d="M12.2 5.6 L14.8 3.3 M12.2 8.5 H15.8 M12.2 11 L14.8 13.5" stroke="#7a7a7a" stroke-width="0.9"/>
</g>
<text x="125.80" y="646.00" font-size="11.66" font-weight="normal" fill="#000" text-anchor="end" textLength="59.90" lengthAdjust="spacingAndGlyphs" >13:20:04.0</text>
<text x="154.50" y="646.00" font-size="11.66" font-weight="normal" fill="#000" text-anchor="middle" textLength="37.46" lengthAdjust="spacingAndGlyphs" >SEGUE</text>
<text x="208.00" y="646.00" font-size="11.66" font-weight="normal" fill="#000" text-anchor="middle" textLength="41.99" lengthAdjust="spacingAndGlyphs" >010795</text>
<text x="276.50" y="646.00" font-size="11.66" font-weight="bold" fill="#00a8ff" stroke="#00a8ff" stroke-width="0.3" text-anchor="middle" textLength="39.97" lengthAdjust="spacingAndGlyphs" >MUSIC</text>
<text x="371.00" y="646.00" font-size="11.66" font-weight="normal" fill="#000" text-anchor="end" textLength="24.70" lengthAdjust="spacingAndGlyphs" >2:36</text>
<text x="377.00" y="646.00" font-size="11.66" font-weight="normal" fill="#000" text-anchor="start" textLength="179.47" lengthAdjust="spacingAndGlyphs" >(Sittin' On) The Dock of The Way</text>
<text x="625.00" y="646.00" font-size="11.66" font-weight="normal" fill="#000" text-anchor="start" textLength="70.15" lengthAdjust="spacingAndGlyphs" >Otis Redding</text>
</g>
<rect x="687" y="365" width="17" height="276" fill="url(#chk)" />
<rect x="687" y="365" width="1" height="276" fill="url(#dotv)" />
<rect x="702" y="365" width="1" height="276" fill="url(#dotv)" />
<rect x="687.5" y="365.5" width="15" height="15" rx="2" fill="url(#btn)" stroke="#8e8e8e" stroke-width="1"/>
<path d="M691 374.5 L694.8 370.2 L698.6 374.5 Z" fill="#000"/>
<rect x="687.5" y="402.5" width="15" height="25" rx="2" fill="url(#btn)" stroke="#8e8e8e" stroke-width="1"/>
<rect x="687.5" y="609.5" width="15" height="15" rx="2" fill="url(#btn)" stroke="#8e8e8e" stroke-width="1"/>
<path d="M691 618.2 L694.7 614 L698.4 618.2 Z" fill="#000"/>
<rect x="687.5" y="625.5" width="15" height="15" rx="2" fill="url(#btn)" stroke="#8e8e8e" stroke-width="1"/>
<path d="M691 629.8 L694.7 634 L698.4 629.8 Z" fill="#000"/>
<rect x="15" y="641" width="672" height="16" fill="url(#chk)" />
<rect x="15" y="641" width="672" height="1" fill="url(#doth)" />
<rect x="15" y="656" width="672" height="1" fill="url(#doth)" />
<rect x="15.5" y="641.5" width="15" height="15" rx="2" fill="url(#btn)" stroke="#8e8e8e" stroke-width="1"/>
<path d="M24.3 644.8 L19.8 648.5 L24.3 652.2 Z" fill="#000"/>
<rect x="31.5" y="641.5" width="355" height="15" rx="2" fill="url(#btn)" stroke="#8e8e8e" stroke-width="1"/>
<rect x="200" y="644" width="1" height="1" fill="#9a9a9a" />
<rect x="200" y="647" width="1" height="1" fill="#9a9a9a" />
<rect x="200" y="650" width="1" height="1" fill="#9a9a9a" />
<rect x="200" y="653" width="1" height="1" fill="#9a9a9a" />
<rect x="204" y="644" width="1" height="1" fill="#9a9a9a" />
<rect x="204" y="647" width="1" height="1" fill="#9a9a9a" />
<rect x="204" y="650" width="1" height="1" fill="#9a9a9a" />
<rect x="204" y="653" width="1" height="1" fill="#9a9a9a" />
<rect x="208" y="644" width="1" height="1" fill="#9a9a9a" />
<rect x="208" y="647" width="1" height="1" fill="#9a9a9a" />
<rect x="208" y="650" width="1" height="1" fill="#9a9a9a" />
<rect x="208" y="653" width="1" height="1" fill="#9a9a9a" />
<rect x="212" y="644" width="1" height="1" fill="#9a9a9a" />
<rect x="212" y="647" width="1" height="1" fill="#9a9a9a" />
<rect x="212" y="650" width="1" height="1" fill="#9a9a9a" />
<rect x="212" y="653" width="1" height="1" fill="#9a9a9a" />
<rect x="216" y="644" width="1" height="1" fill="#9a9a9a" />
<rect x="216" y="647" width="1" height="1" fill="#9a9a9a" />
<rect x="216" y="650" width="1" height="1" fill="#9a9a9a" />
<rect x="216" y="653" width="1" height="1" fill="#9a9a9a" />
<rect x="655.5" y="641.5" width="15" height="15" rx="2" fill="url(#btn)" stroke="#8e8e8e" stroke-width="1"/>
<path d="M664.3 644.8 L659.8 648.5 L664.3 652.2 Z" fill="#000"/>
<rect x="671.5" y="641.5" width="15" height="15" rx="2" fill="url(#btn)" stroke="#8e8e8e" stroke-width="1"/>
<path d="M675.9 644.8 L680.4 648.5 L675.9 652.2 Z" fill="#000"/>
<rect x="687" y="641" width="17" height="16" fill="#efefef" />
<rect x="22.5" y="669.5" width="79" height="49" rx="3" ry="3" fill="url(#btn)" stroke="#7c7c7c" stroke-width="1"/>
<rect x="23.5" y="670.5" width="77" height="1" fill="#f4f4f6" opacity="0.7"/>
<text x="62.00" y="692.00" font-size="12.72" font-weight="bold" fill="#000" stroke="#000" stroke-width="0.3" text-anchor="middle" textLength="39.94" lengthAdjust="spacingAndGlyphs" >Insert</text>
<text x="62.00" y="706.00" font-size="12.72" font-weight="bold" fill="#000" stroke="#000" stroke-width="0.3" text-anchor="middle" textLength="35.98" lengthAdjust="spacingAndGlyphs" >Track</text>
<rect x="114.5" y="669.5" width="79" height="49" rx="3" ry="3" fill="url(#btn)" stroke="#7c7c7c" stroke-width="1"/>
<rect x="115.5" y="670.5" width="77" height="1" fill="#f4f4f6" opacity="0.7"/>
<text x="154.80" y="692.80" font-size="12.72" font-weight="bold" fill="#ffffff" stroke="#ffffff" stroke-width="0.3" text-anchor="middle" textLength="44.23" lengthAdjust="spacingAndGlyphs" opacity="0.35">Delete</text>
<text x="154.00" y="692.00" font-size="12.72" font-weight="bold" fill="#8c8c8c" stroke="#8c8c8c" stroke-width="0.3" text-anchor="middle" textLength="44.23" lengthAdjust="spacingAndGlyphs" >Delete</text>
<text x="154.80" y="706.80" font-size="12.72" font-weight="bold" fill="#ffffff" stroke="#ffffff" stroke-width="0.3" text-anchor="middle" textLength="35.98" lengthAdjust="spacingAndGlyphs" opacity="0.35">Track</text>
<text x="154.00" y="706.00" font-size="12.72" font-weight="bold" fill="#8c8c8c" stroke="#8c8c8c" stroke-width="0.3" text-anchor="middle" textLength="35.98" lengthAdjust="spacingAndGlyphs" >Track</text>
<rect x="514.5" y="669.5" width="79" height="49" rx="3" ry="3" fill="url(#btn)" stroke="#7c7c7c" stroke-width="1"/>
<rect x="515.5" y="670.5" width="77" height="1" fill="#f4f4f6" opacity="0.7"/>
<text x="554.00" y="692.00" font-size="12.72" font-weight="bold" fill="#000" stroke="#000" stroke-width="0.3" text-anchor="middle" textLength="58.72" lengthAdjust="spacingAndGlyphs" >Previous</text>
<text x="554.00" y="706.00" font-size="12.72" font-weight="bold" fill="#000" stroke="#000" stroke-width="0.3" text-anchor="middle" textLength="35.98" lengthAdjust="spacingAndGlyphs" >Track</text>
<rect x="604.5" y="669.5" width="79" height="49" rx="3" ry="3" fill="url(#btn)" stroke="#555" stroke-width="1"/>
<rect x="605.5" y="670.5" width="77" height="1" fill="#f4f4f6" opacity="0.7"/>
<rect x="607" y="672" width="74" height="1" fill="url(#dothk)" />
<rect x="607" y="715" width="74" height="1" fill="url(#dothk)" />
<rect x="607" y="672" width="1" height="44" fill="url(#dotvk)" />
<rect x="680" y="672" width="1" height="44" fill="url(#dotvk)" />
<text x="644.00" y="692.00" font-size="12.72" font-weight="bold" fill="#000" stroke="#000" stroke-width="0.3" text-anchor="middle" textLength="31.66" lengthAdjust="spacingAndGlyphs" >Next</text>
<text x="644.00" y="706.00" font-size="12.72" font-weight="bold" fill="#000" stroke="#000" stroke-width="0.3" text-anchor="middle" textLength="35.98" lengthAdjust="spacingAndGlyphs" >Track</text>
<rect x="713.5" y="669.5" width="79" height="49" rx="3" ry="3" fill="url(#btn)" stroke="#7c7c7c" stroke-width="1"/>
<rect x="714.5" y="670.5" width="77" height="1" fill="#f4f4f6" opacity="0.7"/>
<text x="753.00" y="698.50" font-size="12.72" font-weight="bold" fill="#000" stroke="#000" stroke-width="0.3" text-anchor="middle" textLength="36.45" lengthAdjust="spacingAndGlyphs" >Close</text>
</svg></body></html>
